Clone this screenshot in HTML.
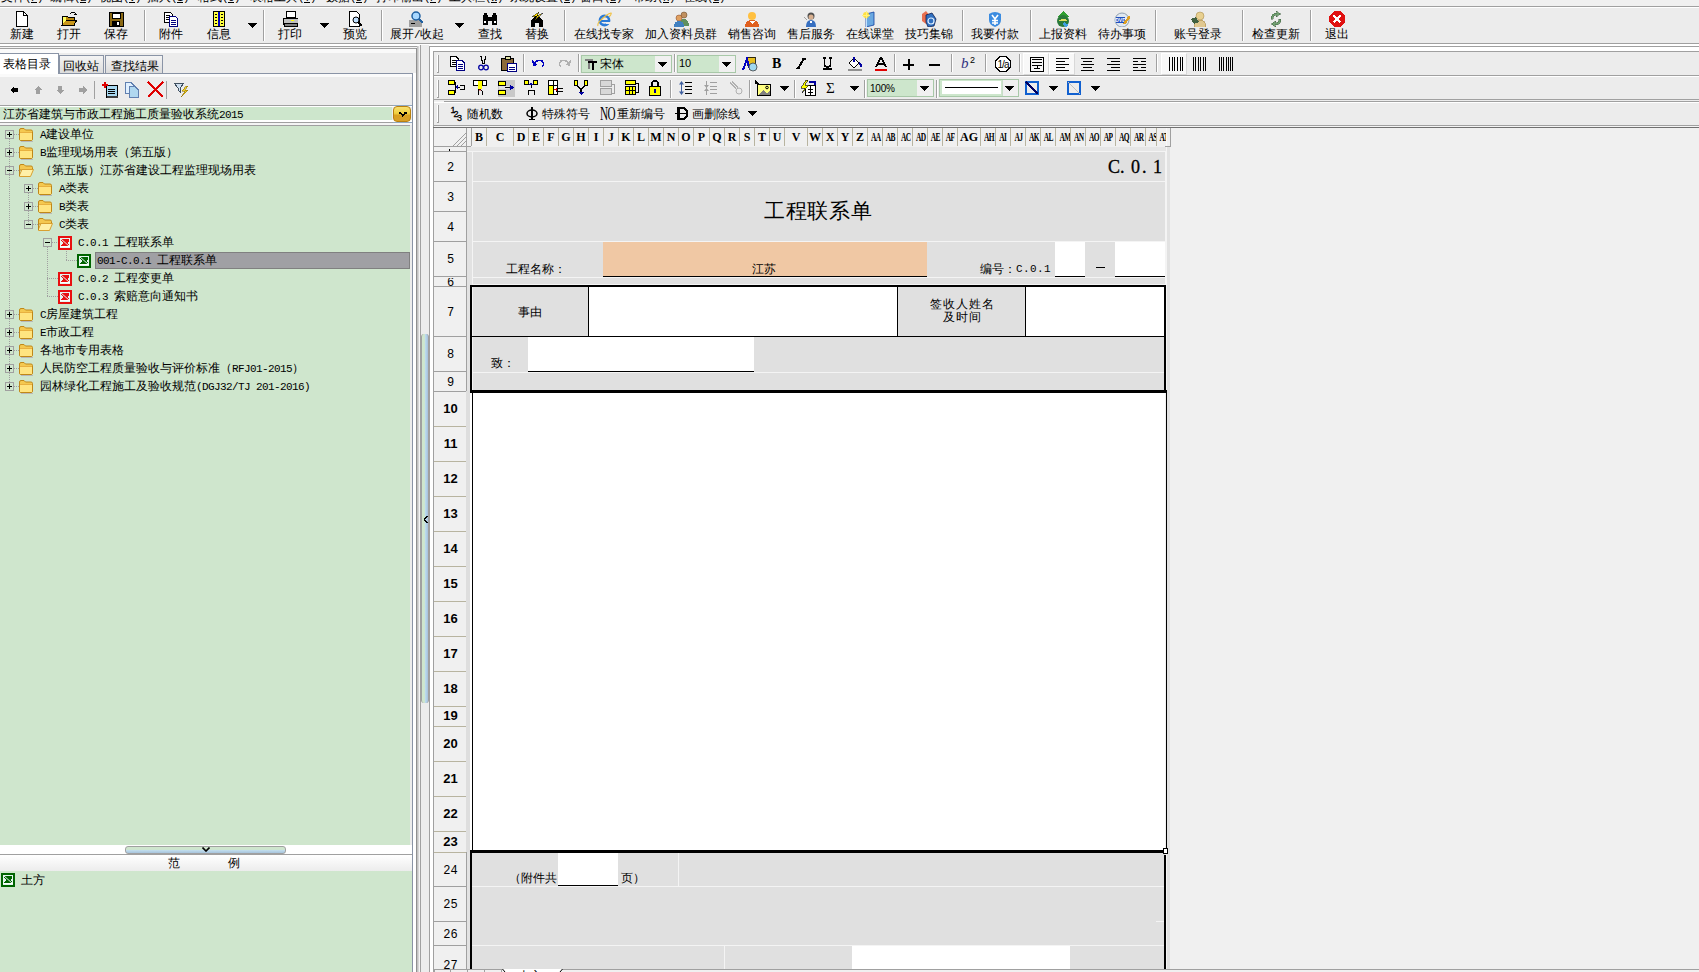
<!DOCTYPE html>
<html><head><meta charset="utf-8"><style>
*{box-sizing:border-box;margin:0;padding:0}
html,body{width:1699px;height:972px;overflow:hidden;background:#f0f0f0;font-family:"Liberation Sans",sans-serif;font-size:12px;color:#000}
body{position:relative}
.a{position:absolute;display:block}
.t{position:absolute;white-space:nowrap;line-height:12px;height:12px;font-size:12px}
.t i{display:inline-block;width:12px;height:12px;font-style:normal;text-align:center;vertical-align:top;overflow:visible}
.t u{display:inline-block;width:6px;height:12px;text-decoration:none;font-family:"Liberation Mono",monospace;font-size:11px;text-align:center;vertical-align:top;line-height:13px;position:relative;top:1px;overflow:visible}
.t b.sp{display:inline-block;width:6px;height:12px;font-weight:normal;vertical-align:top}
.hd{position:absolute;font-family:"Liberation Serif",serif;font-weight:bold;font-size:12px;line-height:18px;text-align:center;white-space:nowrap;overflow:hidden}
svg.a rect,svg.a path{shape-rendering:crispEdges}
.rn{position:absolute;left:0;width:33px;text-align:center;font-family:"Liberation Mono",monospace;font-size:12px;white-space:nowrap}
</style></head><body>
<div class="a" style="left:0px;top:0px;width:1699px;height:6px;background:#f0f0f0;overflow:hidden"></div>
<div class="a" style="left:0;top:0;width:1699px;height:6px;overflow:hidden">
<div class="t" style="left:1px;top:-9px;"><i>文</i><i>件</i><u>(</u><u>F</u><u>)</u></div>
<div class="a" style="left:31px;top:2px;width:6px;height:1px;background:#000"></div>
<div class="t" style="left:50px;top:-9px;"><i>编</i><i>辑</i><u>(</u><u>E</u><u>)</u></div>
<div class="a" style="left:80px;top:2px;width:6px;height:1px;background:#000"></div>
<div class="t" style="left:99px;top:-9px;"><i>视</i><i>图</i><u>(</u><u>V</u><u>)</u></div>
<div class="a" style="left:129px;top:2px;width:6px;height:1px;background:#000"></div>
<div class="t" style="left:147px;top:-9px;"><i>插</i><i>入</i><u>(</u><u>I</u><u>)</u></div>
<div class="a" style="left:177px;top:2px;width:6px;height:1px;background:#000"></div>
<div class="t" style="left:198px;top:-9px;"><i>格</i><i>式</i><u>(</u><u>O</u><u>)</u></div>
<div class="a" style="left:228px;top:2px;width:6px;height:1px;background:#000"></div>
<div class="t" style="left:250px;top:-9px;"><i>表</i><i>格</i><i>工</i><i>具</i><u>(</u><u>T</u><u>)</u></div>
<div class="a" style="left:304px;top:2px;width:6px;height:1px;background:#000"></div>
<div class="t" style="left:326px;top:-9px;"><i>数</i><i>据</i><u>(</u><u>D</u><u>)</u></div>
<div class="a" style="left:356px;top:2px;width:6px;height:1px;background:#000"></div>
<div class="t" style="left:376px;top:-9px;"><i>打</i><i>印</i><i>输</i><i>出</i><u>(</u><u>P</u><u>)</u></div>
<div class="a" style="left:430px;top:2px;width:6px;height:1px;background:#000"></div>
<div class="t" style="left:449px;top:-9px;"><i>工</i><i>具</i><i>栏</i><u>(</u><u>W</u><u>)</u></div>
<div class="a" style="left:491px;top:2px;width:6px;height:1px;background:#000"></div>
<div class="t" style="left:510px;top:-9px;"><i>系</i><i>统</i><i>设</i><i>置</i><u>(</u><u>S</u><u>)</u></div>
<div class="a" style="left:564px;top:2px;width:6px;height:1px;background:#000"></div>
<div class="t" style="left:580px;top:-9px;"><i>窗</i><i>口</i><u>(</u><u>B</u><u>)</u></div>
<div class="a" style="left:610px;top:2px;width:6px;height:1px;background:#000"></div>
<div class="t" style="left:633px;top:-9px;"><i>帮</i><i>助</i><u>(</u><u>H</u><u>)</u></div>
<div class="a" style="left:663px;top:2px;width:6px;height:1px;background:#000"></div>
<div class="t" style="left:683px;top:-9px;"><i>在</i><i>线</i><u>(</u><u>L</u><u>)</u></div>
<div class="a" style="left:713px;top:2px;width:6px;height:1px;background:#000"></div>
</div>
<div class="a" style="left:0px;top:6px;width:1699px;height:1px;background:#a0a0a0"></div>
<div class="a" style="left:0px;top:7px;width:1699px;height:36px;background:#ececec"></div>
<div class="a" style="left:0px;top:7px;width:1699px;height:1px;background:#ffffff"></div>
<div class="a" style="left:0px;top:43px;width:1699px;height:1px;background:#a0a0a0"></div>
<div class="a" style="left:0px;top:44px;width:1699px;height:928px;background:#f0f0f0"></div>
<div class="a" style="left:0px;top:44px;width:1699px;height:2px;background:#ffffff"></div>
<div class="t" style="left:10px;top:28px;"><i>新</i><i>建</i></div>
<div class="t" style="left:57px;top:28px;"><i>打</i><i>开</i></div>
<div class="t" style="left:104px;top:28px;"><i>保</i><i>存</i></div>
<div class="t" style="left:159px;top:28px;"><i>附</i><i>件</i></div>
<div class="t" style="left:207px;top:28px;"><i>信</i><i>息</i></div>
<div class="t" style="left:278px;top:28px;"><i>打</i><i>印</i></div>
<div class="t" style="left:343px;top:28px;"><i>预</i><i>览</i></div>
<div class="t" style="left:390px;top:28px;"><i>展</i><i>开</i><u>/</u><i>收</i><i>起</i></div>
<div class="t" style="left:478px;top:28px;"><i>查</i><i>找</i></div>
<div class="t" style="left:525px;top:28px;"><i>替</i><i>换</i></div>
<div class="t" style="left:574px;top:28px;"><i>在</i><i>线</i><i>找</i><i>专</i><i>家</i></div>
<div class="t" style="left:645px;top:28px;"><i>加</i><i>入</i><i>资</i><i>料</i><i>员</i><i>群</i></div>
<div class="t" style="left:728px;top:28px;"><i>销</i><i>售</i><i>咨</i><i>询</i></div>
<div class="t" style="left:787px;top:28px;"><i>售</i><i>后</i><i>服</i><i>务</i></div>
<div class="t" style="left:846px;top:28px;"><i>在</i><i>线</i><i>课</i><i>堂</i></div>
<div class="t" style="left:905px;top:28px;"><i>技</i><i>巧</i><i>集</i><i>锦</i></div>
<div class="t" style="left:971px;top:28px;"><i>我</i><i>要</i><i>付</i><i>款</i></div>
<div class="t" style="left:1039px;top:28px;"><i>上</i><i>报</i><i>资</i><i>料</i></div>
<div class="t" style="left:1098px;top:28px;"><i>待</i><i>办</i><i>事</i><i>项</i></div>
<div class="t" style="left:1174px;top:28px;"><i>账</i><i>号</i><i>登</i><i>录</i></div>
<div class="t" style="left:1252px;top:28px;"><i>检</i><i>查</i><i>更</i><i>新</i></div>
<div class="t" style="left:1325px;top:28px;"><i>退</i><i>出</i></div>
<div class="a" style="left:144px;top:10px;width:1px;height:31px;background:#a0a0a0"></div>
<div class="a" style="left:145px;top:10px;width:1px;height:31px;background:#ffffff"></div>
<div class="a" style="left:263px;top:10px;width:1px;height:31px;background:#a0a0a0"></div>
<div class="a" style="left:264px;top:10px;width:1px;height:31px;background:#ffffff"></div>
<div class="a" style="left:381px;top:10px;width:1px;height:31px;background:#a0a0a0"></div>
<div class="a" style="left:382px;top:10px;width:1px;height:31px;background:#ffffff"></div>
<div class="a" style="left:564px;top:10px;width:1px;height:31px;background:#a0a0a0"></div>
<div class="a" style="left:565px;top:10px;width:1px;height:31px;background:#ffffff"></div>
<div class="a" style="left:962px;top:10px;width:1px;height:31px;background:#a0a0a0"></div>
<div class="a" style="left:963px;top:10px;width:1px;height:31px;background:#ffffff"></div>
<div class="a" style="left:1030px;top:10px;width:1px;height:31px;background:#a0a0a0"></div>
<div class="a" style="left:1031px;top:10px;width:1px;height:31px;background:#ffffff"></div>
<div class="a" style="left:1155px;top:10px;width:1px;height:31px;background:#a0a0a0"></div>
<div class="a" style="left:1156px;top:10px;width:1px;height:31px;background:#ffffff"></div>
<div class="a" style="left:1242px;top:10px;width:1px;height:31px;background:#a0a0a0"></div>
<div class="a" style="left:1243px;top:10px;width:1px;height:31px;background:#ffffff"></div>
<div class="a" style="left:1310px;top:10px;width:1px;height:31px;background:#a0a0a0"></div>
<div class="a" style="left:1311px;top:10px;width:1px;height:31px;background:#ffffff"></div>
<svg class="a" style="left:247px;top:23px;" width="10" height="5" viewBox="0 0 10 5"><path d="M0 0H10L5 5Z" fill="#000"/></svg>
<svg class="a" style="left:319px;top:23px;" width="10" height="5" viewBox="0 0 10 5"><path d="M0 0H10L5 5Z" fill="#000"/></svg>
<svg class="a" style="left:454px;top:23px;" width="10" height="5" viewBox="0 0 10 5"><path d="M0 0H10L5 5Z" fill="#000"/></svg>
<svg class="a" style="left:14px;top:11px;" width="16" height="16" viewBox="0 0 16 16"><path d="M2.5 0.5H9.5L13.5 4.5V15.5H2.5Z" fill="#fff" stroke="#000"/><path d="M9.5 0.5V4.5H13.5" fill="none" stroke="#000"/></svg>
<svg class="a" style="left:61px;top:11px;" width="16" height="16" viewBox="0 0 16 16"><path d="M1 5H6L7 6H13V14H1Z" fill="#b8860b" stroke="#000" stroke-width="1"/><path d="M3 9H16L13 14H1Z" fill="#c8961b" stroke="#000"/><path d="M2 6L5 6L5 10L2 12Z" fill="#ffff60"/><path d="M9 3Q12 0 15 3" fill="none" stroke="#000"/><path d="M13 3H16V1" fill="none" stroke="#000"/></svg>
<svg class="a" style="left:108px;top:11px;" width="16" height="16" viewBox="0 0 16 16"><rect x="1" y="1" width="14" height="14" fill="#8b6914" stroke="#000"/><rect x="4" y="2" width="8" height="5" fill="#fff" stroke="#000"/><rect x="4" y="10" width="8" height="5" fill="#000"/><rect x="9" y="11" width="2" height="3" fill="#fff"/></svg>
<svg class="a" style="left:163px;top:11px;" width="16" height="16" viewBox="0 0 16 16"><path d="M1.5 1.5H7.5L9.5 3.5V11.5H1.5Z" fill="#fff" stroke="#000"/><path d="M3 4H7M3 6H7M3 8H7" stroke="#000"/><path d="M6.5 5.5H12.5L14.5 7.5V15.5H6.5Z" fill="#fff" stroke="#000080"/><path d="M8 9H13M8 11H13M8 13H13" stroke="#000080"/></svg>
<svg class="a" style="left:211px;top:11px;" width="16" height="16" viewBox="0 0 16 16"><rect x="2.5" y="0.5" width="11" height="15" fill="#ffff40" stroke="#000"/><rect x="7" y="1" width="2" height="14" fill="#0000c0"/><path d="M4 3H6M4 6H6M4 9H6M4 12H6M10 3H12M10 6H12M10 9H12M10 12H12" stroke="#000"/></svg>
<svg class="a" style="left:282px;top:11px;" width="16" height="16" viewBox="0 0 16 16"><rect x="4" y="0.5" width="9" height="6" fill="#fff" stroke="#000"/><path d="M1 7H16V13H1Z" fill="#c0c0c0" stroke="#000"/><rect x="2" y="12" width="13" height="3" fill="#808080" stroke="#000"/><rect x="9" y="9" width="3" height="1" fill="#ff0"/></svg>
<svg class="a" style="left:347px;top:11px;" width="16" height="16" viewBox="0 0 16 16"><path d="M2.5 0.5H9.5L12.5 3.5V15.5H2.5Z" fill="#fff" stroke="#000"/><circle cx="9" cy="9" r="3" fill="#c0e0ff" stroke="#000"/><path d="M11 11L15 15" stroke="#000" stroke-width="2"/></svg>
<svg class="a" style="left:408px;top:11px;" width="16" height="16" viewBox="0 0 16 16"><rect x="1" y="9" width="13" height="7" fill="#a0a0a0" rx="1"/><path d="M3 12H7" stroke="#000"/><circle cx="8" cy="5" r="4" fill="#a8d8ff" stroke="#2060a0" stroke-width="1.5"/><path d="M11 8L15 12" stroke="#2060a0" stroke-width="2.5"/></svg>
<svg class="a" style="left:482px;top:11px;" width="16" height="16" viewBox="0 0 16 16"><rect x="1" y="4" width="5" height="10" fill="#000"/><rect x="10" y="4" width="5" height="10" fill="#000"/><rect x="5" y="6" width="6" height="4" fill="#000"/><rect x="2" y="2" width="3" height="3" fill="#000"/><rect x="11" y="2" width="3" height="3" fill="#000"/><rect x="2" y="10" width="2" height="2" fill="#fff"/><rect x="12" y="10" width="2" height="2" fill="#fff"/></svg>
<svg class="a" style="left:529px;top:11px;" width="16" height="16" viewBox="0 0 16 16"><path d="M2 16V9L8 4L14 9V16H10V12H6V16Z" fill="#000"/><path d="M3 6L10 1L8 5L14 2L6 9L8 5Z" fill="#ffe000" stroke="#000" stroke-width="0.5"/></svg>
<svg class="a" style="left:596px;top:11px;" width="16" height="16" viewBox="0 0 16 16"><circle cx="8.5" cy="9.5" r="4.6" fill="none" stroke="#2a7ad8" stroke-width="2.6"/><path d="M4 9.5H13" stroke="#2a7ad8" stroke-width="2"/><rect x="10" y="10.5" width="5" height="2.5" fill="#ececec"/><path d="M2 15Q1 12 6 8Q11 3 15 2Q16 3 13 6" fill="none" stroke="#f0c040" stroke-width="1.1" style="shape-rendering:auto"/></svg>
<svg class="a" style="left:673px;top:11px;" width="16" height="16" viewBox="0 0 16 16"><circle cx="11" cy="4" r="3" fill="#c09060" stroke="#604020" stroke-width="0.5"/><path d="M6 15Q6 8 11 8Q16 8 16 15Z" fill="#609060"/><circle cx="6" cy="7" r="3" fill="#e0a060" stroke="#804020" stroke-width="0.5"/><path d="M1 16Q1 10 6 10Q11 10 11 16Z" fill="#4080c0"/></svg>
<svg class="a" style="left:744px;top:11px;" width="16" height="16" viewBox="0 0 16 16"><circle cx="8" cy="5" r="4" fill="#ffc040"/><path d="M1 16Q1 9 8 9Q15 9 15 16Z" fill="#e06020"/><path d="M5 10L8 13L11 10" fill="#fff"/></svg>
<svg class="a" style="left:803px;top:11px;" width="16" height="16" viewBox="0 0 16 16"><circle cx="8" cy="5" r="3.5" fill="#505050"/><circle cx="8" cy="6" r="2.5" fill="#d8b090"/><path d="M3 16Q3 9 8 9Q13 9 13 16Z" fill="#3870c0" style="shape-rendering:auto"/><path d="M7 10L8 14L9 10Z" fill="#fff"/><path d="M1 6L4 9" stroke="#a0a0a0" fill="none"/></svg>
<svg class="a" style="left:862px;top:11px;" width="16" height="16" viewBox="0 0 16 16"><path d="M4 3L12 1V14L4 16Z" fill="#6aa8e0" stroke="#1040a0" stroke-width="0.8" style="shape-rendering:auto"/><path d="M4.5 3V16" stroke="#c0e0ff"/><circle cx="4" cy="4" r="3" fill="#ffe040"/><path d="M0 4H8M4 0V8" stroke="#fff080"/></svg>
<svg class="a" style="left:921px;top:11px;" width="16" height="16" viewBox="0 0 16 16"><path d="M1 3L5 0L9 5L5 13L1 10Z" fill="#e87050" style="shape-rendering:auto"/><path d="M5 4L11 2L15 8L13 15L7 16L5 11Z" fill="#3070c0" stroke="#102050" stroke-width="0.8" style="shape-rendering:auto"/><circle cx="10" cy="10" r="3" fill="none" stroke="#e0f0ff" stroke-width="1.2"/></svg>
<svg class="a" style="left:987px;top:11px;" width="16" height="16" viewBox="0 0 16 16"><path d="M2 3Q8 -1 14 3V9Q14 14 8 16Q2 14 2 9Z" fill="#3c8ce0" style="shape-rendering:auto"/><path d="M5 4L8 8L11 4M8 8V14M5 9.5H11M5 12H11" stroke="#fff" stroke-width="1.6" fill="none" style="shape-rendering:auto"/></svg>
<svg class="a" style="left:1055px;top:11px;" width="16" height="16" viewBox="0 0 16 16"><path d="M8 0L14 6H2Z" fill="#30a030"/><circle cx="8" cy="10" r="6" fill="#2a7a3a"/><path d="M3 10Q8 6 13 10" fill="#e0e060"/><path d="M9 11L14 14L11 16L7 13Z" fill="#40a0e0"/></svg>
<svg class="a" style="left:1114px;top:11px;" width="16" height="16" viewBox="0 0 16 16"><circle cx="8" cy="9" r="7" fill="#e0e8f0" stroke="#90a0b0"/><rect x="2" y="6" width="9" height="6" fill="#2050c0"/><text x="6.5" y="11" font-size="5" font-family="Liberation Sans" font-weight="bold" fill="#fff" text-anchor="middle">DVD</text><path d="M10 13L16 5" stroke="#e0a020" stroke-width="2.5"/></svg>
<svg class="a" style="left:1190px;top:11px;" width="16" height="16" viewBox="0 0 16 16"><circle cx="10" cy="5" r="4" fill="#e8d090" stroke="#a08040" stroke-width="0.5"/><path d="M4 16Q4 9 10 9Q16 9 16 16Z" fill="#e0c890" stroke="#a08040" stroke-width="0.5"/><path d="M1 8L6 6L9 11L4 13Z" fill="#406040"/></svg>
<svg class="a" style="left:1268px;top:11px;" width="16" height="16" viewBox="0 0 16 16"><path d="M3 8Q3 2 9 2L8 0L13 3L8 6L9 4Q5 4 5 8Z" fill="#70a070" stroke="#406040" stroke-width="0.5"/><path d="M13 8Q13 14 7 14L8 16L3 13L8 10L7 12Q11 12 11 8Z" fill="#70a070" stroke="#406040" stroke-width="0.5"/></svg>
<svg class="a" style="left:1329px;top:11px;" width="16" height="16" viewBox="0 0 16 16"><path d="M5 0H11L16 5V11L11 16H5L0 11V5Z" fill="#e01010"/><path d="M4.5 4.5L11.5 11.5M11.5 4.5L4.5 11.5" stroke="#fff" stroke-width="2.5"/></svg>
<div class="a" style="left:0px;top:46px;width:419px;height:1px;background:#a0a0a0"></div>
<div class="a" style="left:0px;top:47px;width:417px;height:1px;background:#f4f4f4"></div>
<div class="a" style="left:0px;top:48px;width:417px;height:1px;background:#a0a0a0"></div>
<div class="a" style="left:0px;top:49px;width:416px;height:923px;background:#ececec"></div>
<div class="a" style="left:0px;top:49px;width:416px;height:4px;background:#fafafa"></div>
<div class="a" style="left:416px;top:48px;width:1px;height:924px;background:#909090"></div>
<div class="a" style="left:417px;top:46px;width:2px;height:926px;background:linear-gradient(90deg,#b8b8b8,#e0e0e0)"></div>
<div class="a" style="left:419px;top:45px;width:1px;height:927px;background:#f4f4f4"></div>
<div class="a" style="left:0px;top:73px;width:413px;height:1px;background:#8a94a6"></div>
<div class="a" style="left:0px;top:53px;width:59px;height:21px;background:#ffffff;border-top:1px solid #8a94a6;border-right:1px solid #8a94a6"></div>
<div class="a" style="left:59px;top:55px;width:45px;height:19px;background:linear-gradient(#f4f4f4,#dcdcdc);border:1px solid #8a94a6"></div>
<div class="a" style="left:105px;top:55px;width:58px;height:19px;background:linear-gradient(#f4f4f4,#dcdcdc);border:1px solid #8a94a6"></div>
<div class="t" style="left:3px;top:58px;"><i>表</i><i>格</i><i>目</i><i>录</i></div>
<div class="t" style="left:63px;top:60px;"><i>回</i><i>收</i><i>站</i></div>
<div class="t" style="left:111px;top:60px;"><i>查</i><i>找</i><i>结</i><i>果</i></div>
<div class="a" style="left:0px;top:74px;width:412px;height:3px;background:#fafafa"></div>
<div class="a" style="left:412px;top:73px;width:1px;height:899px;background:#8a94a6"></div>
<div class="a" style="left:413px;top:73px;width:3px;height:899px;background:#ffffff"></div>
<div class="a" style="left:0px;top:105px;width:393px;height:1px;background:#a0a0a0"></div>
<div class="a" style="left:393px;top:105px;width:19px;height:1px;background:#90a8c0"></div>
<svg class="a" style="left:10px;top:86px;" width="8" height="8" viewBox="0 0 8 8"><path d="M0 4L4 0V2H8V6H4V8Z" fill="#000"/></svg>
<svg class="a" style="left:34px;top:86px;" width="8" height="8" viewBox="0 0 8 8"><path d="M4 0L8 4H6V8H2V4H0Z" fill="#a0a0a0"/></svg>
<svg class="a" style="left:56px;top:86px;" width="8" height="8" viewBox="0 0 8 8"><path d="M4 8L8 4H6V0H2V4H0Z" fill="#a0a0a0"/></svg>
<svg class="a" style="left:79px;top:86px;" width="8" height="8" viewBox="0 0 8 8"><path d="M8 4L4 0V2H0V6H4V8Z" fill="#a0a0a0"/></svg>
<div class="a" style="left:94px;top:81px;width:1px;height:18px;background:#a0a0a0"></div>
<div class="a" style="left:166px;top:81px;width:1px;height:18px;background:#a0a0a0"></div>
<svg class="a" style="left:101px;top:81px;" width="17" height="17" viewBox="0 0 17 17"><rect x="5" y="4" width="11" height="12" fill="#a8d8f0" stroke="#000"/><path d="M7 8H14M7 10H14M7 12H14" stroke="#000"/><path d="M1 4H7M4 1V7" stroke="#e00000" stroke-width="2.5"/><rect x="6" y="15" width="11" height="2" fill="#404040"/></svg>
<svg class="a" style="left:124px;top:81px;" width="16" height="17" viewBox="0 0 16 17"><path d="M1.5 1.5H7L10 4.5V12.5H1.5Z" fill="#e0f0ff" stroke="#6080b0"/><path d="M5.5 5.5H11L14.5 9V16.5H5.5Z" fill="#b0d8f0" stroke="#6080b0"/></svg>
<svg class="a" style="left:147px;top:81px;" width="17" height="17" viewBox="0 0 17 17"><path d="M1 1L16 16M16 1L1 16" stroke="#e00000" stroke-width="2"/></svg>
<svg class="a" style="left:173px;top:81px;" width="18" height="17" viewBox="0 0 18 17"><path d="M1 2H11L7 7V11L5 9V7Z" fill="#d0e0f0" stroke="#405060"/><path d="M13 5L9 10H12L8 16L15 9H12L15 5Z" fill="#f0d020" stroke="#806000" stroke-width="0.5"/></svg>
<div class="a" style="left:0px;top:106px;width:412px;height:1px;background:#ffffff"></div>
<div class="a" style="left:0px;top:107px;width:392px;height:13px;background:#cde6cc"></div>
<div class="a" style="left:0px;top:120px;width:412px;height:2px;background:#ffffff"></div>
<div class="t" style="left:3px;top:108px;"><i>江</i><i>苏</i><i>省</i><i>建</i><i>筑</i><i>与</i><i>市</i><i>政</i><i>工</i><i>程</i><i>施</i><i>工</i><i>质</i><i>量</i><i>验</i><i>收</i><i>系</i><i>统</i><u>2</u><u>0</u><u>1</u><u>5</u></div>
<div class="a" style="left:0px;top:122px;width:393px;height:1px;background:#a0a0a0"></div>
<div class="a" style="left:393px;top:122px;width:19px;height:1px;background:#90a8c0"></div>
<div class="a" style="left:0px;top:123px;width:412px;height:2px;background:#f4f4f4"></div>
<div class="a" style="left:393px;top:106px;width:18px;height:16px;background:linear-gradient(#f8e070 0%,#f0d040 45%,#d8a020 60%,#d8a028 100%);border:1px solid #b88010;border-radius:4px"></div>
<svg class="a" style="left:399px;top:112px;" width="8" height="5" viewBox="0 0 8 5"><path d="M0 1H2L4 4L6 1H8" stroke="#000" fill="none" stroke-width="1.4"/></svg>
<div class="a" style="left:0px;top:125px;width:410px;height:1px;background:#a0a0a0"></div>
<div class="a" style="left:0px;top:126px;width:410px;height:719px;background:#cfe6cd"></div>
<div class="a" style="left:0;top:125px;width:412px;height:720px;overflow:hidden">
</div>
<div class="a" style="left:9px;top:139px;width:1px;height:247px;background:repeating-linear-gradient(#a0a0a0 0 1px,transparent 1px 2px)"></div>
<div class="a" style="left:28px;top:229px;width:1px;height:-5px;background:repeating-linear-gradient(#a0a0a0 0 1px,transparent 1px 2px)"></div>
<div class="a" style="left:28px;top:193px;width:1px;height:31px;background:repeating-linear-gradient(#a0a0a0 0 1px,transparent 1px 2px)"></div>
<div class="a" style="left:47px;top:247px;width:1px;height:49px;background:repeating-linear-gradient(#a0a0a0 0 1px,transparent 1px 2px)"></div>
<div class="a" style="left:66px;top:251px;width:1px;height:9px;background:repeating-linear-gradient(#a0a0a0 0 1px,transparent 1px 2px)"></div>
<div class="a" style="left:14px;top:134px;width:5px;height:1px;background:repeating-linear-gradient(90deg,#a0a0a0 0 1px,transparent 1px 2px)"></div>
<div class="a" style="left:14px;top:152px;width:5px;height:1px;background:repeating-linear-gradient(90deg,#a0a0a0 0 1px,transparent 1px 2px)"></div>
<div class="a" style="left:14px;top:170px;width:5px;height:1px;background:repeating-linear-gradient(90deg,#a0a0a0 0 1px,transparent 1px 2px)"></div>
<div class="a" style="left:14px;top:314px;width:5px;height:1px;background:repeating-linear-gradient(90deg,#a0a0a0 0 1px,transparent 1px 2px)"></div>
<div class="a" style="left:14px;top:332px;width:5px;height:1px;background:repeating-linear-gradient(90deg,#a0a0a0 0 1px,transparent 1px 2px)"></div>
<div class="a" style="left:14px;top:350px;width:5px;height:1px;background:repeating-linear-gradient(90deg,#a0a0a0 0 1px,transparent 1px 2px)"></div>
<div class="a" style="left:14px;top:368px;width:5px;height:1px;background:repeating-linear-gradient(90deg,#a0a0a0 0 1px,transparent 1px 2px)"></div>
<div class="a" style="left:14px;top:386px;width:5px;height:1px;background:repeating-linear-gradient(90deg,#a0a0a0 0 1px,transparent 1px 2px)"></div>
<div class="a" style="left:33px;top:188px;width:5px;height:1px;background:repeating-linear-gradient(90deg,#a0a0a0 0 1px,transparent 1px 2px)"></div>
<div class="a" style="left:33px;top:206px;width:5px;height:1px;background:repeating-linear-gradient(90deg,#a0a0a0 0 1px,transparent 1px 2px)"></div>
<div class="a" style="left:33px;top:224px;width:5px;height:1px;background:repeating-linear-gradient(90deg,#a0a0a0 0 1px,transparent 1px 2px)"></div>
<div class="a" style="left:52px;top:242px;width:6px;height:1px;background:repeating-linear-gradient(90deg,#a0a0a0 0 1px,transparent 1px 2px)"></div>
<div class="a" style="left:47px;top:278px;width:11px;height:1px;background:repeating-linear-gradient(90deg,#a0a0a0 0 1px,transparent 1px 2px)"></div>
<div class="a" style="left:47px;top:296px;width:11px;height:1px;background:repeating-linear-gradient(90deg,#a0a0a0 0 1px,transparent 1px 2px)"></div>
<div class="a" style="left:66px;top:260px;width:11px;height:1px;background:repeating-linear-gradient(90deg,#a0a0a0 0 1px,transparent 1px 2px)"></div>
<svg class="a" style="left:5px;top:130px;" width="9" height="9" viewBox="0 0 9 9"><rect x="0.5" y="0.5" width="8" height="8" fill="none" stroke="#a0a0a0"/><path d="M2 4.5H7" stroke="#000"/><path d="M4.5 2V7" stroke="#000"/></svg>
<svg class="a" style="left:18px;top:127px;" width="16" height="15" viewBox="0 0 16 15"><path d="M1.5 12V3Q1.5 1.5 3 1.5H6L7.5 3H13Q14.5 3 14.5 4.5V12Q14.5 13.5 13 13.5H3Q1.5 13.5 1.5 12Z" fill="#f4c850" stroke="#c08818" style="shape-rendering:auto"/><rect x="2" y="5" width="12" height="8" fill="#ffe480"/><path d="M2 5.5H14" stroke="#e8b040"/><path d="M3 14.5H15" stroke="#b8b8b8"/></svg>
<div class="t" style="left:40px;top:128px;"><u>A</u><i>建</i><i>设</i><i>单</i><i>位</i></div>
<svg class="a" style="left:5px;top:148px;" width="9" height="9" viewBox="0 0 9 9"><rect x="0.5" y="0.5" width="8" height="8" fill="none" stroke="#a0a0a0"/><path d="M2 4.5H7" stroke="#000"/><path d="M4.5 2V7" stroke="#000"/></svg>
<svg class="a" style="left:18px;top:145px;" width="16" height="15" viewBox="0 0 16 15"><path d="M1.5 12V3Q1.5 1.5 3 1.5H6L7.5 3H13Q14.5 3 14.5 4.5V12Q14.5 13.5 13 13.5H3Q1.5 13.5 1.5 12Z" fill="#f4c850" stroke="#c08818" style="shape-rendering:auto"/><rect x="2" y="5" width="12" height="8" fill="#ffe480"/><path d="M2 5.5H14" stroke="#e8b040"/><path d="M3 14.5H15" stroke="#b8b8b8"/></svg>
<div class="t" style="left:40px;top:146px;"><u>B</u><i>监</i><i>理</i><i>现</i><i>场</i><i>用</i><i>表</i><i>（</i><i>第</i><i>五</i><i>版</i><i>）</i></div>
<svg class="a" style="left:5px;top:166px;" width="9" height="9" viewBox="0 0 9 9"><rect x="0.5" y="0.5" width="8" height="8" fill="none" stroke="#a0a0a0"/><path d="M2 4.5H7" stroke="#000"/></svg>
<svg class="a" style="left:18px;top:163px;" width="16" height="15" viewBox="0 0 16 15"><path d="M1.5 12V3Q1.5 1.5 3 1.5H6L7.5 3H13Q14.5 3 14.5 4.5V7H1.5Z" fill="#f4c850" stroke="#c08818" style="shape-rendering:auto"/><path d="M4 6.5H15.5L12.5 13.5H1.5V12Z" fill="#fff0a8" stroke="#d8a030" style="shape-rendering:auto"/><path d="M1.5 6V13" stroke="#c08818"/></svg>
<div class="t" style="left:40px;top:164px;"><i>（</i><i>第</i><i>五</i><i>版</i><i>）</i><i>江</i><i>苏</i><i>省</i><i>建</i><i>设</i><i>工</i><i>程</i><i>监</i><i>理</i><i>现</i><i>场</i><i>用</i><i>表</i></div>
<svg class="a" style="left:24px;top:184px;" width="9" height="9" viewBox="0 0 9 9"><rect x="0.5" y="0.5" width="8" height="8" fill="none" stroke="#a0a0a0"/><path d="M2 4.5H7" stroke="#000"/><path d="M4.5 2V7" stroke="#000"/></svg>
<svg class="a" style="left:37px;top:181px;" width="16" height="15" viewBox="0 0 16 15"><path d="M1.5 12V3Q1.5 1.5 3 1.5H6L7.5 3H13Q14.5 3 14.5 4.5V12Q14.5 13.5 13 13.5H3Q1.5 13.5 1.5 12Z" fill="#f4c850" stroke="#c08818" style="shape-rendering:auto"/><rect x="2" y="5" width="12" height="8" fill="#ffe480"/><path d="M2 5.5H14" stroke="#e8b040"/><path d="M3 14.5H15" stroke="#b8b8b8"/></svg>
<div class="t" style="left:59px;top:182px;"><u>A</u><i>类</i><i>表</i></div>
<svg class="a" style="left:24px;top:202px;" width="9" height="9" viewBox="0 0 9 9"><rect x="0.5" y="0.5" width="8" height="8" fill="none" stroke="#a0a0a0"/><path d="M2 4.5H7" stroke="#000"/><path d="M4.5 2V7" stroke="#000"/></svg>
<svg class="a" style="left:37px;top:199px;" width="16" height="15" viewBox="0 0 16 15"><path d="M1.5 12V3Q1.5 1.5 3 1.5H6L7.5 3H13Q14.5 3 14.5 4.5V12Q14.5 13.5 13 13.5H3Q1.5 13.5 1.5 12Z" fill="#f4c850" stroke="#c08818" style="shape-rendering:auto"/><rect x="2" y="5" width="12" height="8" fill="#ffe480"/><path d="M2 5.5H14" stroke="#e8b040"/><path d="M3 14.5H15" stroke="#b8b8b8"/></svg>
<div class="t" style="left:59px;top:200px;"><u>B</u><i>类</i><i>表</i></div>
<svg class="a" style="left:24px;top:220px;" width="9" height="9" viewBox="0 0 9 9"><rect x="0.5" y="0.5" width="8" height="8" fill="none" stroke="#a0a0a0"/><path d="M2 4.5H7" stroke="#000"/></svg>
<svg class="a" style="left:37px;top:217px;" width="16" height="15" viewBox="0 0 16 15"><path d="M1.5 12V3Q1.5 1.5 3 1.5H6L7.5 3H13Q14.5 3 14.5 4.5V7H1.5Z" fill="#f4c850" stroke="#c08818" style="shape-rendering:auto"/><path d="M4 6.5H15.5L12.5 13.5H1.5V12Z" fill="#fff0a8" stroke="#d8a030" style="shape-rendering:auto"/><path d="M1.5 6V13" stroke="#c08818"/></svg>
<div class="t" style="left:59px;top:218px;"><u>C</u><i>类</i><i>表</i></div>
<svg class="a" style="left:43px;top:238px;" width="9" height="9" viewBox="0 0 9 9"><rect x="0.5" y="0.5" width="8" height="8" fill="none" stroke="#a0a0a0"/><path d="M2 4.5H7" stroke="#000"/></svg>
<svg class="a" style="left:58px;top:236px;" width="14" height="14" viewBox="0 0 14 14"><rect x="0" y="0" width="14" height="14" fill="#e81010"/><rect x="2" y="2" width="10" height="10" fill="#e4f6f0"/><path d="M3 3H11V5L9 7L11 9V10H3V9L5 7L3 5Z" fill="#e81010"/><path d="M3 3L11 10" stroke="#e4f6f0" stroke-width="1" style="shape-rendering:auto"/><rect x="2" y="10" width="10" height="1" fill="#ffffff"/><rect x="2" y="3" width="1" height="2" fill="#e4f6f0"/></svg>
<div class="t" style="left:78px;top:236px;"><u>C</u><u>.</u><u>0</u><u>.</u><u>1</u><b class="sp"> </b><i>工</i><i>程</i><i>联</i><i>系</i><i>单</i></div>
<div class="a" style="left:95px;top:252px;width:315px;height:17px;background:#a0a0a4;border:1px solid #808080"></div>
<svg class="a" style="left:77px;top:254px;" width="14" height="14" viewBox="0 0 14 14"><rect x="0" y="0" width="14" height="14" fill="#006400"/><rect x="2" y="2" width="10" height="10" fill="#e4f6f0"/><path d="M3 3H11V5L9 7L11 9V10H3V9L5 7L3 5Z" fill="#006400"/><path d="M3 3L11 10" stroke="#e4f6f0" stroke-width="1" style="shape-rendering:auto"/><rect x="2" y="10" width="10" height="1" fill="#ffffff"/><rect x="2" y="3" width="1" height="2" fill="#e4f6f0"/></svg>
<div class="t" style="left:97px;top:254px;"><u>0</u><u>0</u><u>1</u><u>-</u><u>C</u><u>.</u><u>0</u><u>.</u><u>1</u><b class="sp"> </b><i>工</i><i>程</i><i>联</i><i>系</i><i>单</i></div>
<svg class="a" style="left:58px;top:272px;" width="14" height="14" viewBox="0 0 14 14"><rect x="0" y="0" width="14" height="14" fill="#e81010"/><rect x="2" y="2" width="10" height="10" fill="#e4f6f0"/><path d="M3 3H11V5L9 7L11 9V10H3V9L5 7L3 5Z" fill="#e81010"/><path d="M3 3L11 10" stroke="#e4f6f0" stroke-width="1" style="shape-rendering:auto"/><rect x="2" y="10" width="10" height="1" fill="#ffffff"/><rect x="2" y="3" width="1" height="2" fill="#e4f6f0"/></svg>
<div class="t" style="left:78px;top:272px;"><u>C</u><u>.</u><u>0</u><u>.</u><u>2</u><b class="sp"> </b><i>工</i><i>程</i><i>变</i><i>更</i><i>单</i></div>
<svg class="a" style="left:58px;top:290px;" width="14" height="14" viewBox="0 0 14 14"><rect x="0" y="0" width="14" height="14" fill="#e81010"/><rect x="2" y="2" width="10" height="10" fill="#e4f6f0"/><path d="M3 3H11V5L9 7L11 9V10H3V9L5 7L3 5Z" fill="#e81010"/><path d="M3 3L11 10" stroke="#e4f6f0" stroke-width="1" style="shape-rendering:auto"/><rect x="2" y="10" width="10" height="1" fill="#ffffff"/><rect x="2" y="3" width="1" height="2" fill="#e4f6f0"/></svg>
<div class="t" style="left:78px;top:290px;"><u>C</u><u>.</u><u>0</u><u>.</u><u>3</u><b class="sp"> </b><i>索</i><i>赔</i><i>意</i><i>向</i><i>通</i><i>知</i><i>书</i></div>
<svg class="a" style="left:5px;top:310px;" width="9" height="9" viewBox="0 0 9 9"><rect x="0.5" y="0.5" width="8" height="8" fill="none" stroke="#a0a0a0"/><path d="M2 4.5H7" stroke="#000"/><path d="M4.5 2V7" stroke="#000"/></svg>
<svg class="a" style="left:18px;top:307px;" width="16" height="15" viewBox="0 0 16 15"><path d="M1.5 12V3Q1.5 1.5 3 1.5H6L7.5 3H13Q14.5 3 14.5 4.5V12Q14.5 13.5 13 13.5H3Q1.5 13.5 1.5 12Z" fill="#f4c850" stroke="#c08818" style="shape-rendering:auto"/><rect x="2" y="5" width="12" height="8" fill="#ffe480"/><path d="M2 5.5H14" stroke="#e8b040"/><path d="M3 14.5H15" stroke="#b8b8b8"/></svg>
<div class="t" style="left:40px;top:308px;"><u>C</u><i>房</i><i>屋</i><i>建</i><i>筑</i><i>工</i><i>程</i></div>
<svg class="a" style="left:5px;top:328px;" width="9" height="9" viewBox="0 0 9 9"><rect x="0.5" y="0.5" width="8" height="8" fill="none" stroke="#a0a0a0"/><path d="M2 4.5H7" stroke="#000"/><path d="M4.5 2V7" stroke="#000"/></svg>
<svg class="a" style="left:18px;top:325px;" width="16" height="15" viewBox="0 0 16 15"><path d="M1.5 12V3Q1.5 1.5 3 1.5H6L7.5 3H13Q14.5 3 14.5 4.5V12Q14.5 13.5 13 13.5H3Q1.5 13.5 1.5 12Z" fill="#f4c850" stroke="#c08818" style="shape-rendering:auto"/><rect x="2" y="5" width="12" height="8" fill="#ffe480"/><path d="M2 5.5H14" stroke="#e8b040"/><path d="M3 14.5H15" stroke="#b8b8b8"/></svg>
<div class="t" style="left:40px;top:326px;"><u>E</u><i>市</i><i>政</i><i>工</i><i>程</i></div>
<svg class="a" style="left:5px;top:346px;" width="9" height="9" viewBox="0 0 9 9"><rect x="0.5" y="0.5" width="8" height="8" fill="none" stroke="#a0a0a0"/><path d="M2 4.5H7" stroke="#000"/><path d="M4.5 2V7" stroke="#000"/></svg>
<svg class="a" style="left:18px;top:343px;" width="16" height="15" viewBox="0 0 16 15"><path d="M1.5 12V3Q1.5 1.5 3 1.5H6L7.5 3H13Q14.5 3 14.5 4.5V12Q14.5 13.5 13 13.5H3Q1.5 13.5 1.5 12Z" fill="#f4c850" stroke="#c08818" style="shape-rendering:auto"/><rect x="2" y="5" width="12" height="8" fill="#ffe480"/><path d="M2 5.5H14" stroke="#e8b040"/><path d="M3 14.5H15" stroke="#b8b8b8"/></svg>
<div class="t" style="left:40px;top:344px;"><i>各</i><i>地</i><i>市</i><i>专</i><i>用</i><i>表</i><i>格</i></div>
<svg class="a" style="left:5px;top:364px;" width="9" height="9" viewBox="0 0 9 9"><rect x="0.5" y="0.5" width="8" height="8" fill="none" stroke="#a0a0a0"/><path d="M2 4.5H7" stroke="#000"/><path d="M4.5 2V7" stroke="#000"/></svg>
<svg class="a" style="left:18px;top:361px;" width="16" height="15" viewBox="0 0 16 15"><path d="M1.5 12V3Q1.5 1.5 3 1.5H6L7.5 3H13Q14.5 3 14.5 4.5V12Q14.5 13.5 13 13.5H3Q1.5 13.5 1.5 12Z" fill="#f4c850" stroke="#c08818" style="shape-rendering:auto"/><rect x="2" y="5" width="12" height="8" fill="#ffe480"/><path d="M2 5.5H14" stroke="#e8b040"/><path d="M3 14.5H15" stroke="#b8b8b8"/></svg>
<div class="t" style="left:40px;top:362px;"><i>人</i><i>民</i><i>防</i><i>空</i><i>工</i><i>程</i><i>质</i><i>量</i><i>验</i><i>收</i><i>与</i><i>评</i><i>价</i><i>标</i><i>准</i><i>（</i><u>R</u><u>F</u><u>J</u><u>0</u><u>1</u><u>-</u><u>2</u><u>0</u><u>1</u><u>5</u><i>）</i></div>
<svg class="a" style="left:5px;top:382px;" width="9" height="9" viewBox="0 0 9 9"><rect x="0.5" y="0.5" width="8" height="8" fill="none" stroke="#a0a0a0"/><path d="M2 4.5H7" stroke="#000"/><path d="M4.5 2V7" stroke="#000"/></svg>
<svg class="a" style="left:18px;top:379px;" width="16" height="15" viewBox="0 0 16 15"><path d="M1.5 12V3Q1.5 1.5 3 1.5H6L7.5 3H13Q14.5 3 14.5 4.5V12Q14.5 13.5 13 13.5H3Q1.5 13.5 1.5 12Z" fill="#f4c850" stroke="#c08818" style="shape-rendering:auto"/><rect x="2" y="5" width="12" height="8" fill="#ffe480"/><path d="M2 5.5H14" stroke="#e8b040"/><path d="M3 14.5H15" stroke="#b8b8b8"/></svg>
<div class="t" style="left:40px;top:380px;"><i>园</i><i>林</i><i>绿</i><i>化</i><i>工</i><i>程</i><i>施</i><i>工</i><i>及</i><i>验</i><i>收</i><i>规</i><i>范</i><u>(</u><u>D</u><u>G</u><u>J</u><u>3</u><u>2</u><u>/</u><u>T</u><u>J</u><b class="sp"> </b><u>2</u><u>0</u><u>1</u><u>-</u><u>2</u><u>0</u><u>1</u><u>6</u><u>)</u></div>
<div class="a" style="left:0px;top:845px;width:412px;height:9px;background:#ffffff"></div>
<div class="a" style="left:125px;top:846px;width:161px;height:8px;background:linear-gradient(#cfe6cd 0%,#cfe6cd 40%,#c0dcec 55%,#a8c4dc 100%);border:1px solid #a0a0a0;border-radius:3px"></div>
<svg class="a" style="left:202px;top:847px;" width="8" height="5" viewBox="0 0 8 5"><path d="M0.5 0.5L4 4L7.5 0.5" stroke="#000" fill="none" stroke-width="1.6" style="shape-rendering:auto"/></svg>
<div class="a" style="left:0px;top:854px;width:412px;height:1px;background:#a0a0a0"></div>
<div class="a" style="left:0px;top:855px;width:412px;height:16px;background:linear-gradient(#ffffff,#ececec)"></div>
<div class="t" style="left:168px;top:857px;"><i>范</i></div>
<div class="t" style="left:228px;top:857px;"><i>例</i></div>
<div class="a" style="left:0px;top:871px;width:412px;height:101px;background:#cfe6cd"></div>
<svg class="a" style="left:1px;top:873px;" width="14" height="14" viewBox="0 0 14 14"><rect x="0" y="0" width="14" height="14" fill="#006400"/><rect x="2" y="2" width="10" height="10" fill="#e4f6f0"/><path d="M3 3H11V5L9 7L11 9V10H3V9L5 7L3 5Z" fill="#006400"/><path d="M3 3L11 10" stroke="#e4f6f0" stroke-width="1" style="shape-rendering:auto"/><rect x="2" y="10" width="10" height="1" fill="#ffffff"/><rect x="2" y="3" width="1" height="2" fill="#e4f6f0"/></svg>
<div class="t" style="left:21px;top:874px;"><i>土</i><i>方</i></div>
<div class="a" style="left:420px;top:45px;width:1px;height:927px;background:#a0a0a0"></div>
<div class="a" style="left:421px;top:45px;width:8px;height:927px;background:#ececec"></div>
<div class="a" style="left:421px;top:334px;width:8px;height:369px;background:linear-gradient(90deg,#cfe6cd 0%,#cfe6cd 40%,#b8d8f0 60%,#a8c0d8 100%);border-left:1px solid #a0a0a0;border-right:1px solid #a0a0a0;border-radius:3px 3px 3px 3px"></div>
<svg class="a" style="left:423px;top:515px;" width="6" height="9" viewBox="0 0 6 9"><path d="M4.5 1L1.5 4.5L4.5 8" stroke="#000" fill="none" stroke-width="1.4"/></svg>
<div class="a" style="left:429px;top:46px;width:1270px;height:926px;background:#f0f0f0"></div>
<div class="a" style="left:429px;top:46px;width:1px;height:926px;background:#a0a0a0"></div>
<div class="a" style="left:429px;top:46px;width:1270px;height:1px;background:#a0a0a0"></div>
<div class="a" style="left:430px;top:47px;width:3px;height:925px;background:#ffffff"></div>
<div class="a" style="left:430px;top:47px;width:1269px;height:4px;background:#ffffff"></div>
<div class="a" style="left:433px;top:51px;width:1266px;height:1px;background:#a0a0a0"></div>
<div class="a" style="left:433px;top:51px;width:1px;height:921px;background:#a0a0a0"></div>
<div class="a" style="left:434px;top:52px;width:1265px;height:23px;background:#ececec"></div>
<div class="a" style="left:434px;top:75px;width:1265px;height:1px;background:#a0a0a0"></div>
<div class="a" style="left:434px;top:76px;width:1265px;height:1px;background:#ffffff"></div>
<div class="a" style="left:434px;top:77px;width:1265px;height:22px;background:#ececec"></div>
<div class="a" style="left:434px;top:99px;width:1265px;height:1px;background:#a0a0a0"></div>
<div class="a" style="left:434px;top:100px;width:1265px;height:1px;background:#ececec"></div>
<div class="a" style="left:444px;top:101px;width:1255px;height:1px;background:#a0a0a0"></div>
<div class="a" style="left:434px;top:102px;width:1265px;height:1px;background:#ffffff"></div>
<div class="a" style="left:434px;top:103px;width:1265px;height:22px;background:#ececec"></div>
<div class="a" style="left:434px;top:125px;width:1265px;height:1px;background:#a0a0a0"></div>
<div class="a" style="left:434px;top:126px;width:1265px;height:1px;background:#f4f4f4"></div>
<div class="a" style="left:437px;top:55px;width:1px;height:17px;background:#ffffff"></div>
<div class="a" style="left:438px;top:55px;width:1px;height:17px;background:#a0a0a0"></div>
<div class="a" style="left:437px;top:72px;width:2px;height:1px;background:#a0a0a0"></div>
<div class="a" style="left:437px;top:80px;width:1px;height:17px;background:#ffffff"></div>
<div class="a" style="left:438px;top:80px;width:1px;height:17px;background:#a0a0a0"></div>
<div class="a" style="left:437px;top:97px;width:2px;height:1px;background:#a0a0a0"></div>
<div class="a" style="left:437px;top:105px;width:1px;height:17px;background:#ffffff"></div>
<div class="a" style="left:438px;top:105px;width:1px;height:17px;background:#a0a0a0"></div>
<div class="a" style="left:437px;top:122px;width:2px;height:1px;background:#a0a0a0"></div>
<svg class="a" style="left:450px;top:56px;" width="16" height="15" viewBox="0 0 16 15"><path d="M0.5 0.5H6L8.5 3V10.5H0.5Z" fill="#fff" stroke="#000"/><path d="M2 4H6M2 6H6M2 8H6" stroke="#000"/><path d="M6.5 4.5H12L14.5 7V14.5H6.5Z" fill="#fff" stroke="#000080"/><path d="M8 8H13M8 10H13M8 12H13" stroke="#000080"/></svg>
<svg class="a" style="left:478px;top:56px;" width="11" height="15" viewBox="0 0 11 15"><path d="M3 0L5 8M8 0L6 8" stroke="#000" stroke-width="1.2"/><circle cx="3" cy="11.5" r="2.3" fill="none" stroke="#0000a0" stroke-width="1.3"/><circle cx="8" cy="11.5" r="2.3" fill="none" stroke="#0000a0" stroke-width="1.3"/></svg>
<svg class="a" style="left:501px;top:56px;" width="17" height="16" viewBox="0 0 17 16"><rect x="0.5" y="2.5" width="12" height="12" fill="#8b6a3a" stroke="#000" rx="1"/><rect x="4" y="0.5" width="5" height="3" fill="#e0e0a0" stroke="#000"/><path d="M6.5 7.5H15.5V15.5H6.5Z" fill="#fff" stroke="#000080"/><path d="M8 11H14M8 13H14" stroke="#000080"/></svg>
<div class="a" style="left:523px;top:54px;width:1px;height:18px;background:#a0a0a0"></div>
<div class="a" style="left:524px;top:54px;width:1px;height:18px;background:#ffffff"></div>
<svg class="a" style="left:532px;top:59px;" width="13" height="9" viewBox="0 0 13 9"><path d="M2 4Q6 0 10 2Q13 5 10 8" fill="none" stroke="#0000c0" stroke-width="1.5"/><path d="M0 1L1 7L6 6Z" fill="#0000c0"/></svg>
<svg class="a" style="left:558px;top:59px;" width="13" height="9" viewBox="0 0 13 9"><path d="M11 4Q7 0 3 2Q0 5 3 8" fill="none" stroke="#b0b0b0" stroke-width="1.5"/><path d="M13 1L12 7L7 6Z" fill="#b0b0b0"/></svg>
<div class="a" style="left:578px;top:54px;width:1px;height:18px;background:#a0a0a0"></div>
<div class="a" style="left:579px;top:54px;width:1px;height:18px;background:#ffffff"></div>
<div class="a" style="left:581px;top:55px;width:91px;height:18px;background:#cde6cc;border:1px solid #a8c8a8"></div>
<div class="a" style="left:655px;top:56px;width:16px;height:16px;background:#f0f0f0"></div>
<svg class="a" style="left:658px;top:62px;" width="9" height="5" viewBox="0 0 9 5"><path d="M0 0H9L4.5 5Z" fill="#000"/></svg>
<svg class="a" style="left:585px;top:58px;" width="12" height="12" viewBox="0 0 12 12"><path d="M0 1H8V3H5V11H3V3H0Z" fill="#808080"/><path d="M3 3H12V5H8.5V12H6.5V5H3Z" fill="#000"/></svg>
<div class="t" style="left:600px;top:58px;"><i>宋</i><i>体</i></div>
<div class="a" style="left:674px;top:54px;width:1px;height:18px;background:#a0a0a0"></div>
<div class="a" style="left:675px;top:54px;width:1px;height:18px;background:#ffffff"></div>
<div class="a" style="left:677px;top:55px;width:59px;height:18px;background:#cde6cc;border:1px solid #a8c8a8"></div>
<div class="a" style="left:719px;top:56px;width:16px;height:16px;background:#f0f0f0"></div>
<svg class="a" style="left:722px;top:62px;" width="9" height="5" viewBox="0 0 9 5"><path d="M0 0H9L4.5 5Z" fill="#000"/></svg>
<div class="a" style="left:679px;top:57px;font-family:Liberation Sans;font-size:11px;line-height:13px">10</div>
<svg class="a" style="left:742px;top:56px;" width="17" height="16" viewBox="0 0 17 16"><rect x="5" y="1" width="8" height="8" fill="#e8c020" stroke="#000" stroke-width="0.8"/><path d="M1 14L5 3L8 14" fill="none" stroke="#0000c0" stroke-width="2"/><circle cx="11" cy="11" r="4" fill="#a0d8f0" stroke="#404040" stroke-width="0.8"/></svg>
<div class="a" style="left:772px;top:57px;font-family:Liberation Serif;font-weight:bold;font-size:14px;line-height:14px">B</div>
<svg class="a" style="left:795px;top:58px;" width="12" height="11" viewBox="0 0 12 11"><path d="M1 10.5H5M7 0.5H11M9 0.5L3 10.5" stroke="#000" stroke-width="2"/></svg>
<svg class="a" style="left:822px;top:57px;" width="11" height="13" viewBox="0 0 11 13"><path d="M1 1H4M7 1H10M2.5 1V7Q2.5 10 5.5 10Q8.5 10 8.5 7V1" fill="none" stroke="#000" stroke-width="1.6"/><path d="M1 12H10" stroke="#000" stroke-width="1.5"/></svg>
<svg class="a" style="left:848px;top:56px;" width="14" height="15" viewBox="0 0 14 15"><path d="M1 7L6 2L11 7L6 12Z" fill="#fff" stroke="#000"/><path d="M6 1V6" stroke="#0000a0" stroke-width="1.5"/><path d="M11 7Q14 9 13 11" fill="none" stroke="#0000a0" stroke-width="2"/><rect x="0" y="13" width="14" height="2" fill="#909090"/></svg>
<svg class="a" style="left:875px;top:57px;" width="12" height="14" viewBox="0 0 12 14"><path d="M1 10L6 0L11 10M3 7H9" fill="none" stroke="#000" stroke-width="1.6"/><rect x="0" y="12" width="12" height="2" fill="#e00000"/></svg>
<div class="a" style="left:894px;top:54px;width:1px;height:18px;background:#a0a0a0"></div>
<div class="a" style="left:895px;top:54px;width:1px;height:18px;background:#ffffff"></div>
<svg class="a" style="left:903px;top:59px;" width="11" height="11" viewBox="0 0 11 11"><path d="M5.5 0V11M0 5.5H11" stroke="#000" stroke-width="2"/></svg>
<svg class="a" style="left:929px;top:63px;" width="11" height="3" viewBox="0 0 11 3"><path d="M0 1.5H11" stroke="#000" stroke-width="2"/></svg>
<div class="a" style="left:951px;top:54px;width:1px;height:18px;background:#a0a0a0"></div>
<div class="a" style="left:952px;top:54px;width:1px;height:18px;background:#ffffff"></div>
<svg class="a" style="left:961px;top:55px;" width="16" height="16" viewBox="0 0 16 16"><text x="0" y="13" font-size="15" font-family="Liberation Serif" font-style="italic" fill="#303080">b</text><text x="9" y="8" font-size="9" font-family="Liberation Sans" fill="#000">2</text></svg>
<div class="a" style="left:985px;top:54px;width:1px;height:18px;background:#a0a0a0"></div>
<div class="a" style="left:986px;top:54px;width:1px;height:18px;background:#ffffff"></div>
<svg class="a" style="left:995px;top:56px;" width="16" height="16" viewBox="0 0 16 16"><path d="M5 0.5H11L15.5 5V11L11 15.5H5L0.5 11V5Z" fill="#fff" stroke="#000"/><text x="8" y="12" font-size="10" font-family="Liberation Sans" text-anchor="middle" letter-spacing="-1">1/a</text></svg>
<div class="a" style="left:1019px;top:54px;width:1px;height:18px;background:#a0a0a0"></div>
<div class="a" style="left:1020px;top:54px;width:1px;height:18px;background:#ffffff"></div>
<div class="a" style="left:1023px;top:53px;width:26px;height:22px;background:#f8f8f8;border-top:1px solid #ffffff;border-left:1px solid #ffffff;border-right:1px solid #d8d8d8;border-bottom:1px solid #d8d8d8"></div>
<div class="a" style="left:1049px;top:53px;width:26px;height:22px;background:#f8f8f8;border-top:1px solid #ffffff;border-left:1px solid #ffffff;border-right:1px solid #d8d8d8;border-bottom:1px solid #d8d8d8"></div>
<svg class="a" style="left:1030px;top:57px;" width="14" height="15" viewBox="0 0 14 15"><rect x="0.5" y="0.5" width="13" height="14" fill="none" stroke="#000" shape-rendering="crispEdges"/><path d="M2 2.5H12M2 5.5H12M2 8.5H12M7 9V12M4 11.5H10" stroke="#000" shape-rendering="crispEdges"/></svg>
<svg class="a" style="left:1056px;top:57px;" width="13" height="14" viewBox="0 0 13 14"><path d="M0 1.5H13M0 4.5H9M0 7.5H13M0 10.5H9M0 13.5H13" stroke="#000" stroke-width="1" shape-rendering="crispEdges"/></svg>
<svg class="a" style="left:1081px;top:57px;" width="13" height="14" viewBox="0 0 13 14"><path d="M0 1.5H13M2 4.5H11M0 7.5H13M2 10.5H11M0 13.5H13" stroke="#000" stroke-width="1" shape-rendering="crispEdges"/></svg>
<svg class="a" style="left:1107px;top:57px;" width="13" height="14" viewBox="0 0 13 14"><path d="M0 1.5H13M4 4.5H13M0 7.5H13M4 10.5H13M0 13.5H13" stroke="#000" stroke-width="1" shape-rendering="crispEdges"/></svg>
<svg class="a" style="left:1133px;top:57px;" width="13" height="14" viewBox="0 0 13 14"><path d="M0 1.5H13M0 4.5H5M8 4.5H13M0 7.5H13M0 10.5H5M8 10.5H13M0 13.5H13" stroke="#000" stroke-width="1" shape-rendering="crispEdges"/></svg>
<div class="a" style="left:1156px;top:54px;width:1px;height:18px;background:#a0a0a0"></div>
<div class="a" style="left:1157px;top:54px;width:1px;height:18px;background:#ffffff"></div>
<div class="a" style="left:1161px;top:53px;width:26px;height:22px;background:#f8f8f8;border-top:1px solid #ffffff;border-left:1px solid #ffffff;border-right:1px solid #d8d8d8;border-bottom:1px solid #d8d8d8"></div>
<svg class="a" style="left:1169px;top:57px;" width="14" height="14" viewBox="0 0 14 14"><path d="M0.5 0V14" stroke="#000" stroke-width="1" shape-rendering="crispEdges"/><path d="M3.5 0V14" stroke="#000" stroke-width="1" shape-rendering="crispEdges"/><path d="M5.5 0V14" stroke="#000" stroke-width="1" shape-rendering="crispEdges"/><path d="M8.5 0V14" stroke="#000" stroke-width="1" shape-rendering="crispEdges"/><path d="M11.5 0V14" stroke="#000" stroke-width="1" shape-rendering="crispEdges"/><path d="M13.5 0V14" stroke="#000" stroke-width="1" shape-rendering="crispEdges"/></svg>
<svg class="a" style="left:1193px;top:57px;" width="14" height="14" viewBox="0 0 14 14"><path d="M0.5 0V14" stroke="#000" stroke-width="1" shape-rendering="crispEdges"/><path d="M2.5 0V14" stroke="#000" stroke-width="1" shape-rendering="crispEdges"/><path d="M5.5 0V14" stroke="#000" stroke-width="1" shape-rendering="crispEdges"/><path d="M7.5 0V14" stroke="#000" stroke-width="1" shape-rendering="crispEdges"/><path d="M10.5 0V14" stroke="#000" stroke-width="1" shape-rendering="crispEdges"/><path d="M12.5 0V14" stroke="#000" stroke-width="1" shape-rendering="crispEdges"/></svg>
<svg class="a" style="left:1219px;top:57px;" width="14" height="14" viewBox="0 0 14 14"><path d="M0.5 0V14" stroke="#000" stroke-width="1" shape-rendering="crispEdges"/><path d="M2.5 0V14" stroke="#000" stroke-width="1" shape-rendering="crispEdges"/><path d="M4.5 0V14" stroke="#000" stroke-width="1" shape-rendering="crispEdges"/><path d="M7.5 0V14" stroke="#000" stroke-width="1" shape-rendering="crispEdges"/><path d="M9.5 0V14" stroke="#000" stroke-width="1" shape-rendering="crispEdges"/><path d="M11.5 0V14" stroke="#000" stroke-width="1" shape-rendering="crispEdges"/><path d="M13.5 0V14" stroke="#000" stroke-width="1" shape-rendering="crispEdges"/></svg>
<svg class="a" style="left:448px;top:80px;" width="17" height="16" viewBox="0 0 17 16"><rect x="0.5" y="0.5" width="6" height="4" fill="#ffff00" stroke="#000"/><rect x="0.5" y="10.5" width="6" height="4" fill="#ffff00" stroke="#000"/><path d="M6 2H7V12H6" fill="none" stroke="#000"/><path d="M8 7H12M12 5H16V9H12" stroke="#000" fill="none"/><path d="M7 7L10 4.5V9.5Z" fill="#0000a0"/></svg>
<svg class="a" style="left:473px;top:80px;" width="17" height="16" viewBox="0 0 17 16"><rect x="0.5" y="0.5" width="13" height="5" fill="#fff" stroke="#000"/><path d="M5 0.5V15M9 0.5V5" stroke="#000"/><rect x="5" y="1" width="4" height="8" fill="#ffff00"/><path d="M5 15V11Q7 8 9 11V15" stroke="#000" fill="none"/><circle cx="7" cy="10" r="0.8" fill="#e00000"/></svg>
<div class="a" style="left:498px;top:80px;width:17px;height:17px;background:#c8c8c8"></div>
<svg class="a" style="left:498px;top:80px;" width="17" height="16" viewBox="0 0 17 16"><rect x="0.5" y="1.5" width="7" height="4" fill="#ffff00" stroke="#000"/><rect x="0.5" y="10.5" width="7" height="4" fill="#ffff00" stroke="#000"/><rect x="0.5" y="6" width="10" height="3" fill="#e0e0e0"/><path d="M7 7.5H13" stroke="#000"/><path d="M16 7.5L12 4.5V10.5Z" fill="#0000a0"/></svg>
<svg class="a" style="left:524px;top:80px;" width="17" height="16" viewBox="0 0 17 16"><rect x="0.5" y="0.5" width="4" height="4" fill="#ffff00" stroke="#000"/><rect x="9.5" y="0.5" width="4" height="4" fill="#ffff00" stroke="#000"/><path d="M7 3V8M4 15V10H10V15" stroke="#000" fill="none"/><path d="M7 2L5 5H9Z" fill="#0000a0"/></svg>
<svg class="a" style="left:548px;top:80px;" width="17" height="16" viewBox="0 0 17 16"><rect x="0.5" y="0.5" width="9" height="14" fill="#fff" stroke="#000"/><path d="M5 0.5V15M0.5 5H9.5" stroke="#000"/><rect x="1" y="6" width="4" height="8" fill="#ffff00"/><path d="M8 8H15M8 11H15" stroke="#000"/><path d="M6 9.5L9 7.5V11.5Z" fill="#e00000"/></svg>
<svg class="a" style="left:574px;top:80px;" width="17" height="16" viewBox="0 0 17 16"><rect x="0.5" y="0.5" width="3" height="5" fill="#ffff00" stroke="#000"/><rect x="10.5" y="0.5" width="3" height="5" fill="#ffff00" stroke="#000"/><path d="M2 5L7 9L12 5M7 9V13" stroke="#000" fill="none" stroke-width="1.2"/><path d="M4 12H10L7 15Z" fill="#0000a0"/></svg>
<svg class="a" style="left:600px;top:80px;" width="17" height="16" viewBox="0 0 17 16"><rect x="0.5" y="0.5" width="11" height="6" fill="#d8d8d8" stroke="#a0a0a0"/><rect x="0.5" y="8.5" width="11" height="6" fill="#d8d8d8" stroke="#a0a0a0"/><path d="M12 4H14V13H12" stroke="#a0a0a0" fill="none"/></svg>
<svg class="a" style="left:625px;top:80px;" width="17" height="16" viewBox="0 0 17 16"><rect x="0.5" y="0.5" width="10" height="4" fill="#ffff00" stroke="#000"/><rect x="0.5" y="6.5" width="10" height="8" fill="#ffff00" stroke="#000"/><path d="M4 6.5V15M7 6.5V15M0.5 10.5H11" stroke="#000"/><path d="M11 3H13V12H11" stroke="#000" fill="none"/></svg>
<svg class="a" style="left:649px;top:80px;" width="17" height="16" viewBox="0 0 17 16"><path d="M3 7V4Q3 1 6 1Q9 1 9 4V7" stroke="#000" fill="none" stroke-width="1.5"/><rect x="0.5" y="6.5" width="11" height="9" fill="#ffff00" stroke="#000"/><rect x="5" y="9" width="2" height="4" fill="#0000a0"/></svg>
<div class="a" style="left:670px;top:80px;width:1px;height:18px;background:#a0a0a0"></div>
<div class="a" style="left:671px;top:80px;width:1px;height:18px;background:#ffffff"></div>
<svg class="a" style="left:678px;top:80px;" width="17" height="16" viewBox="0 0 17 16"><path d="M3.5 2V14" stroke="#4060a0" stroke-width="1"/><path d="M1 4.5L3.5 1L6 4.5ZM1 11.5L3.5 15L6 11.5Z" fill="#4060a0" style="shape-rendering:auto"/><path d="M7 2.5H14M7 6.5H14M7 9.5H14M7 13.5H14" stroke="#000" stroke-width="1"/></svg>
<svg class="a" style="left:703px;top:80px;" width="17" height="16" viewBox="0 0 17 16"><path d="M3.5 1V15" stroke="#a0a0a0" stroke-width="1"/><path d="M1 5L3.5 8L6 5ZM1 11L3.5 8L6 11Z" fill="#a0a0a0" style="shape-rendering:auto"/><path d="M7 2.5H14M7 6.5H14M7 9.5H14M7 13.5H14" stroke="#a0a0a0" stroke-width="1"/></svg>
<svg class="a" style="left:728px;top:80px;" width="17" height="16" viewBox="0 0 17 16"><path d="M2 2L8 9M4 1L10 8" stroke="#b0b0b0" stroke-width="1.3"/><circle cx="11" cy="11" r="3" fill="none" stroke="#b0b0b0"/></svg>
<div class="a" style="left:749px;top:80px;width:1px;height:18px;background:#a0a0a0"></div>
<div class="a" style="left:750px;top:80px;width:1px;height:18px;background:#ffffff"></div>
<svg class="a" style="left:755px;top:80px;" width="17" height="16" viewBox="0 0 17 16"><path d="M0 0L4 4H0Z" fill="#000"/><rect x="2.5" y="4.5" width="13" height="11" fill="#ffff80" stroke="#000"/><path d="M3 15L8 10L12 13L15 11V15Z" fill="#808080"/><circle cx="12" cy="7.5" r="1.3" fill="none" stroke="#000"/></svg>
<svg class="a" style="left:780px;top:86px;" width="9" height="5" viewBox="0 0 9 5"><path d="M0 0H9L4.5 5Z" fill="#000"/></svg>
<div class="a" style="left:794px;top:80px;width:1px;height:18px;background:#a0a0a0"></div>
<div class="a" style="left:795px;top:80px;width:1px;height:18px;background:#ffffff"></div>
<svg class="a" style="left:800px;top:80px;" width="17" height="16" viewBox="0 0 17 16"><rect x="5.5" y="5.5" width="10" height="10" fill="#fff" stroke="#000"/><path d="M8 9H13M8 12H13M10 6V15" stroke="#000"/><path d="M6 0L1 8H5L2 13L9 5H5L8 0Z" fill="#ffff00" stroke="#000" stroke-width="0.6"/><path d="M9 2H15V5" stroke="#0000a0" fill="none" stroke-width="1.5"/></svg>
<div class="a" style="left:826px;top:80px;font-family:Liberation Serif;font-size:15px;line-height:16px">&#931;</div>
<svg class="a" style="left:850px;top:86px;" width="9" height="5" viewBox="0 0 9 5"><path d="M0 0H9L4.5 5Z" fill="#000"/></svg>
<div class="a" style="left:864px;top:80px;width:1px;height:18px;background:#a0a0a0"></div>
<div class="a" style="left:865px;top:80px;width:1px;height:18px;background:#ffffff"></div>
<div class="a" style="left:867px;top:79px;width:67px;height:18px;background:#cde6cc;border:1px solid #a8c8a8"></div>
<div class="a" style="left:917px;top:80px;width:16px;height:16px;background:#f0f0f0"></div>
<svg class="a" style="left:920px;top:86px;" width="9" height="5" viewBox="0 0 9 5"><path d="M0 0H9L4.5 5Z" fill="#000"/></svg>
<div class="a" style="left:870px;top:82px;font-family:Liberation Sans;font-size:10px;line-height:13px;letter-spacing:-0.2px">100%</div>
<div class="a" style="left:936px;top:80px;width:1px;height:18px;background:#a0a0a0"></div>
<div class="a" style="left:937px;top:80px;width:1px;height:18px;background:#ffffff"></div>
<div class="a" style="left:939px;top:79px;width:80px;height:18px;background:#cde6cc;border:1px solid #a8c8a8"></div>
<div class="a" style="left:942px;top:81px;width:59px;height:13px;background:#ffffff"></div>
<div class="a" style="left:945px;top:87px;width:53px;height:1px;background:#000"></div>
<div class="a" style="left:1002px;top:80px;width:16px;height:16px;background:#f0f0f0;border-left:1px solid #c8dcc8"></div>
<svg class="a" style="left:1005px;top:86px;" width="9" height="5" viewBox="0 0 9 5"><path d="M0 0H9L4.5 5Z" fill="#000"/></svg>
<svg class="a" style="left:1025px;top:81px;" width="14" height="14" viewBox="0 0 14 14"><rect x="1" y="1" width="12" height="12" fill="none" stroke="#1060d0" stroke-width="2"/><path d="M1 1L13 13" stroke="#000060" stroke-width="1.6"/></svg>
<svg class="a" style="left:1049px;top:86px;" width="9" height="5" viewBox="0 0 9 5"><path d="M0 0H9L4.5 5Z" fill="#000"/></svg>
<svg class="a" style="left:1067px;top:81px;" width="14" height="14" viewBox="0 0 14 14"><rect x="1" y="1" width="12" height="12" fill="none" stroke="#1060d0" stroke-width="2"/><path d="M1 1L13 13" stroke="#c0c0c0" stroke-width="1"/></svg>
<svg class="a" style="left:1091px;top:86px;" width="9" height="5" viewBox="0 0 9 5"><path d="M0 0H9L4.5 5Z" fill="#000"/></svg>
<svg class="a" style="left:450px;top:105px;" width="14" height="17" viewBox="0 0 14 17"><text x="0.5" y="8" font-size="9" font-family="Liberation Sans" stroke="#000" stroke-width="0.3">1</text><text x="3.5" y="12" font-size="9" font-family="Liberation Sans" stroke="#000" stroke-width="0.3">2</text><text x="7" y="16" font-size="9" font-family="Liberation Sans" stroke="#000" stroke-width="0.3">3</text></svg>
<div class="t" style="left:467px;top:108px;"><i>随</i><i>机</i><i>数</i></div>
<svg class="a" style="left:526px;top:107px;" width="12" height="13" viewBox="0 0 12 13"><path d="M6 0V13M3 13H9" stroke="#000" stroke-width="1.6"/><ellipse cx="6" cy="6.5" rx="5" ry="3.5" fill="none" stroke="#000" stroke-width="1.5"/></svg>
<div class="t" style="left:542px;top:108px;"><i>特</i><i>殊</i><i>符</i><i>号</i></div>
<div class="a" style="left:600px;top:105px;font-family:Liberation Serif;font-size:18px;line-height:18px;letter-spacing:-1px;transform:scaleX(0.62);transform-origin:0 0">NO</div>
<div class="t" style="left:617px;top:108px;"><i>重</i><i>新</i><i>编</i><i>号</i></div>
<svg class="a" style="left:675px;top:107px;" width="13" height="13" viewBox="0 0 13 13"><path d="M3 1H7Q12 1 12 6.5Q12 12 7 12H3Z" fill="none" stroke="#000" stroke-width="2"/><path d="M4 1V12" stroke="#000" stroke-width="2.5"/><path d="M0 6.5H13" stroke="#000" stroke-width="1.5"/></svg>
<div class="t" style="left:692px;top:108px;"><i>画</i><i>删</i><i>除</i><i>线</i></div>
<svg class="a" style="left:748px;top:111px;" width="9" height="5" viewBox="0 0 9 5"><path d="M0 0H9L4.5 5Z" fill="#000"/></svg>
<div class="a" style="left:433px;top:127px;width:1266px;height:1px;background:#707070"></div>
<div class="a" style="left:434px;top:128px;width:1265px;height:841px;background:#f0f0f0"></div>
<div class="a" style="left:434px;top:128px;width:736px;height:18px;background:#f0f0f0"></div>
<div class="a" style="left:434px;top:146px;width:37px;height:1px;background:#a0a0a0"></div>
<div class="a" style="left:466px;top:128px;width:1px;height:263px;background:#a0a0a0"></div>
<div class="a" style="left:466px;top:852px;width:1px;height:117px;background:#a0a0a0"></div>
<svg class="a" style="left:453px;top:131px;" width="13" height="15" viewBox="0 0 13 15"><path d="M0 15L13 2M4 15L13 6M8 15L13 10" stroke="#a0a0a0" stroke-width="1.2"/></svg>
<div class="a" style="left:471px;top:128px;width:1px;height:18px;background:#a0a0a0"></div>
<div class="a" style="left:486px;top:128px;width:1px;height:18px;background:#b8b4a0"></div>
<div class="hd" style="left:472px;top:128px;width:14px;height:18px">B</div>
<div class="a" style="left:513px;top:128px;width:1px;height:18px;background:#b8b4a0"></div>
<div class="hd" style="left:487px;top:128px;width:26px;height:18px">C</div>
<div class="a" style="left:528px;top:128px;width:1px;height:18px;background:#b8b4a0"></div>
<div class="hd" style="left:514px;top:128px;width:14px;height:18px">D</div>
<div class="a" style="left:543px;top:128px;width:1px;height:18px;background:#b8b4a0"></div>
<div class="hd" style="left:529px;top:128px;width:14px;height:18px">E</div>
<div class="a" style="left:558px;top:128px;width:1px;height:18px;background:#b8b4a0"></div>
<div class="hd" style="left:544px;top:128px;width:14px;height:18px">F</div>
<div class="a" style="left:573px;top:128px;width:1px;height:18px;background:#b8b4a0"></div>
<div class="hd" style="left:559px;top:128px;width:14px;height:18px">G</div>
<div class="a" style="left:588px;top:128px;width:1px;height:18px;background:#b8b4a0"></div>
<div class="hd" style="left:574px;top:128px;width:14px;height:18px">H</div>
<div class="a" style="left:603px;top:128px;width:1px;height:18px;background:#b8b4a0"></div>
<div class="hd" style="left:589px;top:128px;width:14px;height:18px">I</div>
<div class="a" style="left:618px;top:128px;width:1px;height:18px;background:#b8b4a0"></div>
<div class="hd" style="left:604px;top:128px;width:14px;height:18px">J</div>
<div class="a" style="left:633px;top:128px;width:1px;height:18px;background:#b8b4a0"></div>
<div class="hd" style="left:619px;top:128px;width:14px;height:18px">K</div>
<div class="a" style="left:648px;top:128px;width:1px;height:18px;background:#b8b4a0"></div>
<div class="hd" style="left:634px;top:128px;width:14px;height:18px">L</div>
<div class="a" style="left:663px;top:128px;width:1px;height:18px;background:#b8b4a0"></div>
<div class="hd" style="left:649px;top:128px;width:14px;height:18px">M</div>
<div class="a" style="left:678px;top:128px;width:1px;height:18px;background:#b8b4a0"></div>
<div class="hd" style="left:664px;top:128px;width:14px;height:18px">N</div>
<div class="a" style="left:693px;top:128px;width:1px;height:18px;background:#b8b4a0"></div>
<div class="hd" style="left:679px;top:128px;width:14px;height:18px">O</div>
<div class="a" style="left:709px;top:128px;width:1px;height:18px;background:#b8b4a0"></div>
<div class="hd" style="left:694px;top:128px;width:15px;height:18px">P</div>
<div class="a" style="left:724px;top:128px;width:1px;height:18px;background:#b8b4a0"></div>
<div class="hd" style="left:710px;top:128px;width:14px;height:18px">Q</div>
<div class="a" style="left:739px;top:128px;width:1px;height:18px;background:#b8b4a0"></div>
<div class="hd" style="left:725px;top:128px;width:14px;height:18px">R</div>
<div class="a" style="left:754px;top:128px;width:1px;height:18px;background:#b8b4a0"></div>
<div class="hd" style="left:740px;top:128px;width:14px;height:18px">S</div>
<div class="a" style="left:769px;top:128px;width:1px;height:18px;background:#b8b4a0"></div>
<div class="hd" style="left:755px;top:128px;width:14px;height:18px">T</div>
<div class="a" style="left:784px;top:128px;width:1px;height:18px;background:#b8b4a0"></div>
<div class="hd" style="left:770px;top:128px;width:14px;height:18px">U</div>
<div class="a" style="left:807px;top:128px;width:1px;height:18px;background:#b8b4a0"></div>
<div class="hd" style="left:785px;top:128px;width:22px;height:18px">V</div>
<div class="a" style="left:822px;top:128px;width:1px;height:18px;background:#b8b4a0"></div>
<div class="hd" style="left:808px;top:128px;width:14px;height:18px">W</div>
<div class="a" style="left:837px;top:128px;width:1px;height:18px;background:#b8b4a0"></div>
<div class="hd" style="left:823px;top:128px;width:14px;height:18px">X</div>
<div class="a" style="left:852px;top:128px;width:1px;height:18px;background:#b8b4a0"></div>
<div class="hd" style="left:838px;top:128px;width:14px;height:18px">Y</div>
<div class="a" style="left:867px;top:128px;width:1px;height:18px;background:#b8b4a0"></div>
<div class="hd" style="left:853px;top:128px;width:14px;height:18px">Z</div>
<div class="a" style="left:882px;top:128px;width:1px;height:18px;background:#b8b4a0"></div>
<div class="hd" style="left:868px;top:128px;width:14px;height:18px"><span style="display:inline-block;transform:scaleX(0.62);letter-spacing:-1px">AA</span></div>
<div class="a" style="left:897px;top:128px;width:1px;height:18px;background:#b8b4a0"></div>
<div class="hd" style="left:883px;top:128px;width:14px;height:18px"><span style="display:inline-block;transform:scaleX(0.62);letter-spacing:-1px">AB</span></div>
<div class="a" style="left:912px;top:128px;width:1px;height:18px;background:#b8b4a0"></div>
<div class="hd" style="left:898px;top:128px;width:14px;height:18px"><span style="display:inline-block;transform:scaleX(0.62);letter-spacing:-1px">AC</span></div>
<div class="a" style="left:927px;top:128px;width:1px;height:18px;background:#b8b4a0"></div>
<div class="hd" style="left:913px;top:128px;width:14px;height:18px"><span style="display:inline-block;transform:scaleX(0.62);letter-spacing:-1px">AD</span></div>
<div class="a" style="left:942px;top:128px;width:1px;height:18px;background:#b8b4a0"></div>
<div class="hd" style="left:928px;top:128px;width:14px;height:18px"><span style="display:inline-block;transform:scaleX(0.62);letter-spacing:-1px">AE</span></div>
<div class="a" style="left:957px;top:128px;width:1px;height:18px;background:#b8b4a0"></div>
<div class="hd" style="left:943px;top:128px;width:14px;height:18px"><span style="display:inline-block;transform:scaleX(0.62);letter-spacing:-1px">AF</span></div>
<div class="a" style="left:980px;top:128px;width:1px;height:18px;background:#b8b4a0"></div>
<div class="hd" style="left:958px;top:128px;width:22px;height:18px">AG</div>
<div class="a" style="left:995px;top:128px;width:1px;height:18px;background:#b8b4a0"></div>
<div class="hd" style="left:981px;top:128px;width:14px;height:18px"><span style="display:inline-block;transform:scaleX(0.62);letter-spacing:-1px">AH</span></div>
<div class="a" style="left:1010px;top:128px;width:1px;height:18px;background:#b8b4a0"></div>
<div class="hd" style="left:996px;top:128px;width:14px;height:18px"><span style="display:inline-block;transform:scaleX(0.62);letter-spacing:-1px">AI</span></div>
<div class="a" style="left:1025px;top:128px;width:1px;height:18px;background:#b8b4a0"></div>
<div class="hd" style="left:1011px;top:128px;width:14px;height:18px"><span style="display:inline-block;transform:scaleX(0.62);letter-spacing:-1px">AJ</span></div>
<div class="a" style="left:1040px;top:128px;width:1px;height:18px;background:#b8b4a0"></div>
<div class="hd" style="left:1026px;top:128px;width:14px;height:18px"><span style="display:inline-block;transform:scaleX(0.62);letter-spacing:-1px">AK</span></div>
<div class="a" style="left:1055px;top:128px;width:1px;height:18px;background:#b8b4a0"></div>
<div class="hd" style="left:1041px;top:128px;width:14px;height:18px"><span style="display:inline-block;transform:scaleX(0.62);letter-spacing:-1px">AL</span></div>
<div class="a" style="left:1070px;top:128px;width:1px;height:18px;background:#b8b4a0"></div>
<div class="hd" style="left:1056px;top:128px;width:14px;height:18px"><span style="display:inline-block;transform:scaleX(0.62);letter-spacing:-1px">AM</span></div>
<div class="a" style="left:1085px;top:128px;width:1px;height:18px;background:#b8b4a0"></div>
<div class="hd" style="left:1071px;top:128px;width:14px;height:18px"><span style="display:inline-block;transform:scaleX(0.62);letter-spacing:-1px">AN</span></div>
<div class="a" style="left:1100px;top:128px;width:1px;height:18px;background:#b8b4a0"></div>
<div class="hd" style="left:1086px;top:128px;width:14px;height:18px"><span style="display:inline-block;transform:scaleX(0.62);letter-spacing:-1px">AO</span></div>
<div class="a" style="left:1115px;top:128px;width:1px;height:18px;background:#b8b4a0"></div>
<div class="hd" style="left:1101px;top:128px;width:14px;height:18px"><span style="display:inline-block;transform:scaleX(0.62);letter-spacing:-1px">AP</span></div>
<div class="a" style="left:1130px;top:128px;width:1px;height:18px;background:#b8b4a0"></div>
<div class="hd" style="left:1116px;top:128px;width:14px;height:18px"><span style="display:inline-block;transform:scaleX(0.62);letter-spacing:-1px">AQ</span></div>
<div class="a" style="left:1145px;top:128px;width:1px;height:18px;background:#b8b4a0"></div>
<div class="hd" style="left:1131px;top:128px;width:14px;height:18px"><span style="display:inline-block;transform:scaleX(0.62);letter-spacing:-1px">AR</span></div>
<div class="a" style="left:1156px;top:128px;width:1px;height:18px;background:#b8b4a0"></div>
<div class="hd" style="left:1146px;top:128px;width:10px;height:18px"><span style="display:inline-block;transform:scaleX(0.62);letter-spacing:-1px">AS</span></div>
<div class="a" style="left:1166px;top:128px;width:1px;height:18px;background:#b8b4a0"></div>
<div class="hd" style="left:1157px;top:128px;width:9px;height:18px"><span style="display:inline-block;transform:scaleX(0.62);letter-spacing:-1px">AT</span></div>
<div class="a" style="left:1166px;top:128px;width:1px;height:18px;background:#f8f8f8"></div>
<div class="a" style="left:1170px;top:128px;width:1px;height:19px;background:#a0a0a0"></div>
<div class="a" style="left:1165px;top:146px;width:5px;height:1px;background:#a0a0a0"></div>
<div class="a" style="left:434px;top:151px;width:32px;height:1px;background:#a0a0a0"></div>
<div class="a" style="left:449px;top:149px;width:1px;height:2px;background:#000"></div>
<div class="a" style="left:434px;top:181px;width:32px;height:1px;background:#a0a0a0"></div>
<div class="rn" style="left:434px;top:153px;height:30px;line-height:30px;font-family:Liberation Mono;font-size:12px;overflow:hidden">2</div>
<div class="a" style="left:434px;top:211px;width:32px;height:1px;background:#a0a0a0"></div>
<div class="rn" style="left:434px;top:183px;height:30px;line-height:30px;font-family:Liberation Mono;font-size:12px;overflow:hidden">3</div>
<div class="a" style="left:434px;top:241px;width:32px;height:1px;background:#a0a0a0"></div>
<div class="rn" style="left:434px;top:213px;height:30px;line-height:30px;font-family:Liberation Mono;font-size:12px;overflow:hidden">4</div>
<div class="a" style="left:434px;top:276px;width:32px;height:1px;background:#a0a0a0"></div>
<div class="rn" style="left:434px;top:243px;height:35px;line-height:35px;font-family:Liberation Mono;font-size:12px;overflow:hidden">5</div>
<div class="a" style="left:434px;top:286px;width:32px;height:1px;background:#a0a0a0"></div>
<div class="rn" style="left:434px;top:278px;height:10px;line-height:10px;font-family:Liberation Mono;font-size:12px;overflow:hidden">6</div>
<div class="a" style="left:434px;top:336px;width:32px;height:1px;background:#a0a0a0"></div>
<div class="rn" style="left:434px;top:288px;height:50px;line-height:50px;font-family:Liberation Mono;font-size:12px;overflow:hidden">7</div>
<div class="a" style="left:434px;top:371px;width:32px;height:1px;background:#a0a0a0"></div>
<div class="rn" style="left:434px;top:338px;height:35px;line-height:35px;font-family:Liberation Mono;font-size:12px;overflow:hidden">8</div>
<div class="a" style="left:434px;top:391px;width:32px;height:1px;background:#a0a0a0"></div>
<div class="rn" style="left:434px;top:373px;height:20px;line-height:20px;font-family:Liberation Mono;font-size:12px;overflow:hidden">9</div>
<div class="a" style="left:434px;top:426px;width:32px;height:1px;background:#b8b4a0"></div>
<div class="rn" style="left:434px;top:391px;height:35px;line-height:35px;font-weight:bold;font-family:Liberation Sans;font-size:13px;overflow:hidden">10</div>
<div class="a" style="left:434px;top:461px;width:32px;height:1px;background:#b8b4a0"></div>
<div class="rn" style="left:434px;top:426px;height:35px;line-height:35px;font-weight:bold;font-family:Liberation Sans;font-size:13px;overflow:hidden">11</div>
<div class="a" style="left:434px;top:496px;width:32px;height:1px;background:#b8b4a0"></div>
<div class="rn" style="left:434px;top:461px;height:35px;line-height:35px;font-weight:bold;font-family:Liberation Sans;font-size:13px;overflow:hidden">12</div>
<div class="a" style="left:434px;top:531px;width:32px;height:1px;background:#b8b4a0"></div>
<div class="rn" style="left:434px;top:496px;height:35px;line-height:35px;font-weight:bold;font-family:Liberation Sans;font-size:13px;overflow:hidden">13</div>
<div class="a" style="left:434px;top:566px;width:32px;height:1px;background:#b8b4a0"></div>
<div class="rn" style="left:434px;top:531px;height:35px;line-height:35px;font-weight:bold;font-family:Liberation Sans;font-size:13px;overflow:hidden">14</div>
<div class="a" style="left:434px;top:601px;width:32px;height:1px;background:#b8b4a0"></div>
<div class="rn" style="left:434px;top:566px;height:35px;line-height:35px;font-weight:bold;font-family:Liberation Sans;font-size:13px;overflow:hidden">15</div>
<div class="a" style="left:434px;top:636px;width:32px;height:1px;background:#b8b4a0"></div>
<div class="rn" style="left:434px;top:601px;height:35px;line-height:35px;font-weight:bold;font-family:Liberation Sans;font-size:13px;overflow:hidden">16</div>
<div class="a" style="left:434px;top:671px;width:32px;height:1px;background:#b8b4a0"></div>
<div class="rn" style="left:434px;top:636px;height:35px;line-height:35px;font-weight:bold;font-family:Liberation Sans;font-size:13px;overflow:hidden">17</div>
<div class="a" style="left:434px;top:706px;width:32px;height:1px;background:#b8b4a0"></div>
<div class="rn" style="left:434px;top:671px;height:35px;line-height:35px;font-weight:bold;font-family:Liberation Sans;font-size:13px;overflow:hidden">18</div>
<div class="a" style="left:434px;top:726px;width:32px;height:1px;background:#b8b4a0"></div>
<div class="rn" style="left:434px;top:706px;height:20px;line-height:20px;font-weight:bold;font-family:Liberation Sans;font-size:13px;overflow:hidden">19</div>
<div class="a" style="left:434px;top:761px;width:32px;height:1px;background:#b8b4a0"></div>
<div class="rn" style="left:434px;top:726px;height:35px;line-height:35px;font-weight:bold;font-family:Liberation Sans;font-size:13px;overflow:hidden">20</div>
<div class="a" style="left:434px;top:796px;width:32px;height:1px;background:#b8b4a0"></div>
<div class="rn" style="left:434px;top:761px;height:35px;line-height:35px;font-weight:bold;font-family:Liberation Sans;font-size:13px;overflow:hidden">21</div>
<div class="a" style="left:434px;top:831px;width:32px;height:1px;background:#b8b4a0"></div>
<div class="rn" style="left:434px;top:796px;height:35px;line-height:35px;font-weight:bold;font-family:Liberation Sans;font-size:13px;overflow:hidden">22</div>
<div class="a" style="left:434px;top:852px;width:32px;height:1px;background:#b8b4a0"></div>
<div class="rn" style="left:434px;top:831px;height:21px;line-height:21px;font-weight:bold;font-family:Liberation Sans;font-size:13px;overflow:hidden">23</div>
<div class="a" style="left:434px;top:886px;width:32px;height:1px;background:#a0a0a0"></div>
<div class="rn" style="left:434px;top:854px;height:34px;line-height:34px;font-family:Liberation Mono;font-size:12px;overflow:hidden">24</div>
<div class="a" style="left:434px;top:921px;width:32px;height:1px;background:#a0a0a0"></div>
<div class="rn" style="left:434px;top:888px;height:35px;line-height:35px;font-family:Liberation Mono;font-size:12px;overflow:hidden">25</div>
<div class="a" style="left:434px;top:945px;width:32px;height:1px;background:#a0a0a0"></div>
<div class="rn" style="left:434px;top:923px;height:24px;line-height:24px;font-family:Liberation Mono;font-size:12px;overflow:hidden">26</div>
<div class="a" style="left:434px;top:969px;width:32px;height:1px;background:#a0a0a0"></div>
<div class="rn" style="left:434px;top:949px;height:35px;line-height:35px;font-family:Liberation Mono;font-size:12px;overflow:hidden">27</div>
<div class="a" style="left:467px;top:147px;width:703px;height:822px;background:#f0f0f0"></div>
<div class="a" style="left:467px;top:147px;width:699px;height:4px;background:#e6e6e6"></div>
<div class="a" style="left:467px;top:151px;width:699px;height:1px;background:#f4f4f4"></div>
<div class="a" style="left:467px;top:152px;width:5px;height:817px;background:#e2e2e2"></div>
<div class="a" style="left:472px;top:152px;width:693px;height:817px;background:#e0e0e0"></div>
<div class="a" style="left:1166px;top:147px;width:1px;height:822px;background:#f4f4f4"></div>
<div class="a" style="left:1167px;top:147px;width:3px;height:822px;background:#e2e2e2"></div>
<div class="a" style="left:466px;top:391px;width:4px;height:461px;background:#dedede"></div>
<div class="a" style="left:472px;top:152px;width:1px;height:240px;background:#f4f4f4"></div>
<div class="a" style="left:472px;top:181px;width:693px;height:1px;background:#f4f4f4"></div>
<div class="a" style="left:472px;top:241px;width:693px;height:1px;background:#f4f4f4"></div>
<div class="a" style="left:472px;top:277px;width:693px;height:1px;background:#f4f4f4"></div>
<div class="a" style="left:1165px;top:152px;width:1px;height:240px;background:#f4f4f4"></div>
<div class="a" style="left:1108px;top:157px;font-family:Liberation Serif;font-size:18px;line-height:20px;white-space:nowrap;-webkit-text-stroke:0.3px #000">C</div>
<div class="a" style="left:1120px;top:157px;font-family:Liberation Serif;font-size:18px;line-height:20px;white-space:nowrap;-webkit-text-stroke:0.3px #000">.</div>
<div class="a" style="left:1131px;top:157px;font-family:Liberation Serif;font-size:18px;line-height:20px;white-space:nowrap;-webkit-text-stroke:0.3px #000">0</div>
<div class="a" style="left:1142px;top:157px;font-family:Liberation Serif;font-size:18px;line-height:20px;white-space:nowrap;-webkit-text-stroke:0.3px #000">.</div>
<div class="a" style="left:1153px;top:157px;font-family:Liberation Serif;font-size:18px;line-height:20px;white-space:nowrap;-webkit-text-stroke:0.3px #000">1</div>
<div class="t" style="left:764px;top:200px;height:22px;line-height:22px;font-size:21px"><i style="width:21.6px;height:22px">工</i><i style="width:21.6px;height:22px">程</i><i style="width:21.6px;height:22px">联</i><i style="width:21.6px;height:22px">系</i><i style="width:21.6px;height:22px">单</i></div>
<div class="t" style="left:506px;top:263px;"><i>工</i><i>程</i><i>名</i><i>称</i><i>：</i></div>
<div class="a" style="left:603px;top:242px;width:324px;height:34px;background:#f0c8a4"></div>
<div class="a" style="left:603px;top:276px;width:324px;height:1px;background:#000"></div>
<div class="t" style="left:752px;top:263px;"><i>江</i><i>苏</i></div>
<div class="t" style="left:980px;top:263px;"><i>编</i><i>号</i><i>：</i></div>
<div class="a" style="left:1016px;top:263px;font-family:Liberation Mono;font-size:11px;line-height:12px;letter-spacing:0.4px">C.0.1</div>
<div class="a" style="left:1055px;top:242px;width:30px;height:34px;background:#ffffff"></div>
<div class="a" style="left:1055px;top:276px;width:30px;height:1px;background:#000"></div>
<div class="a" style="left:1096px;top:267px;width:9px;height:1px;background:#000"></div>
<div class="a" style="left:1115px;top:242px;width:50px;height:34px;background:#ffffff"></div>
<div class="a" style="left:1115px;top:276px;width:50px;height:1px;background:#000"></div>
<div class="a" style="left:472px;top:284px;width:693px;height:1px;background:#f4f4f4"></div>
<div class="a" style="left:470px;top:285px;width:696px;height:2px;background:#000"></div>
<div class="a" style="left:470px;top:285px;width:2px;height:107px;background:#000"></div>
<div class="a" style="left:1164px;top:285px;width:2px;height:105px;background:#000"></div>
<div class="a" style="left:589px;top:287px;width:308px;height:49px;background:#ffffff"></div>
<div class="a" style="left:588px;top:287px;width:1px;height:49px;background:#000"></div>
<div class="a" style="left:897px;top:287px;width:1px;height:49px;background:#000"></div>
<div class="a" style="left:1025px;top:287px;width:1px;height:49px;background:#000"></div>
<div class="a" style="left:1026px;top:287px;width:138px;height:49px;background:#ffffff"></div>
<div class="a" style="left:472px;top:336px;width:692px;height:1px;background:#000"></div>
<div class="t" style="left:518px;top:306px;"><i>事</i><i>由</i></div>
<div class="t" style="left:929px;top:298px"><i style="width:13px">签</i><i style="width:13px">收</i><i style="width:13px">人</i><i style="width:13px">姓</i><i style="width:13px">名</i></div>
<div class="t" style="left:942px;top:311px"><i style="width:13px">及</i><i style="width:13px">时</i><i style="width:13px">间</i></div>
<div class="t" style="left:491px;top:357px;"><i>致</i><i>：</i></div>
<div class="a" style="left:528px;top:337px;width:226px;height:34px;background:#ffffff"></div>
<div class="a" style="left:528px;top:371px;width:226px;height:1px;background:#000"></div>
<div class="a" style="left:472px;top:372px;width:692px;height:1px;background:#f4f4f4"></div>
<div class="a" style="left:470px;top:390px;width:696px;height:3px;background:#000"></div>
<div class="a" style="left:473px;top:393px;width:692px;height:457px;background:#ffffff"></div>
<div class="a" style="left:472px;top:393px;width:1px;height:457px;background:#000"></div>
<div class="a" style="left:1166px;top:390px;width:1px;height:460px;background:#000"></div>
<div class="a" style="left:470px;top:393px;width:2px;height:457px;background:#ffffff"></div>
<div class="a" style="left:470px;top:850px;width:693px;height:3px;background:#000"></div>
<svg class="a" style="left:1163px;top:848px;" width="6" height="7" viewBox="0 0 6 7"><rect x="0.5" y="0.5" width="4" height="5" fill="#fff" stroke="#000" stroke-width="1"/></svg>
<div class="a" style="left:470px;top:853px;width:2px;height:116px;background:#000"></div>
<div class="a" style="left:1164px;top:855px;width:2px;height:114px;background:#000"></div>
<div class="a" style="left:558px;top:853px;width:60px;height:33px;background:#ffffff"></div>
<div class="a" style="left:558px;top:885px;width:60px;height:1px;background:#000"></div>
<div class="t" style="left:509px;top:872px;"><i>（</i><i>附</i><i>件</i><i>共</i></div>
<div class="t" style="left:621px;top:872px;"><i>页</i><i>）</i></div>
<div class="a" style="left:678px;top:853px;width:1px;height:33px;background:#f4f4f4"></div>
<div class="a" style="left:472px;top:886px;width:692px;height:1px;background:#f4f4f4"></div>
<div class="a" style="left:1156px;top:921px;width:8px;height:1px;background:#f4f4f4"></div>
<div class="a" style="left:472px;top:945px;width:692px;height:1px;background:#f4f4f4"></div>
<div class="a" style="left:724px;top:946px;width:1px;height:23px;background:#f4f4f4"></div>
<div class="a" style="left:852px;top:946px;width:218px;height:23px;background:#ffffff"></div>
<div class="a" style="left:434px;top:969px;width:1265px;height:1px;background:#a0a0a0"></div>
<div class="a" style="left:434px;top:970px;width:1265px;height:2px;background:#f0f0f0"></div>
<div class="a" style="left:434px;top:970px;width:16px;height:2px;background:#f0f0f0"></div>
<div class="a" style="left:450px;top:970px;width:1px;height:2px;background:#a0a0a0"></div>
<div class="a" style="left:451px;top:970px;width:16px;height:2px;background:#f0f0f0"></div>
<div class="a" style="left:467px;top:970px;width:1px;height:2px;background:#a0a0a0"></div>
<div class="a" style="left:468px;top:970px;width:16px;height:2px;background:#f0f0f0"></div>
<div class="a" style="left:484px;top:970px;width:1px;height:2px;background:#a0a0a0"></div>
<div class="a" style="left:485px;top:970px;width:16px;height:2px;background:#f0f0f0"></div>
<div class="a" style="left:501px;top:970px;width:1px;height:2px;background:#a0a0a0"></div>
<div class="a" style="left:434px;top:969px;width:1px;height:3px;background:#a0a0a0"></div>
<svg class="a" style="left:502px;top:969px;" width="62" height="3" viewBox="0 0 62 3"><path d="M0 0L3 3H57L61 0Z" fill="#fff" style="shape-rendering:auto"/><path d="M0.5 0L3 3M60.5 0L58 3" stroke="#000" style="shape-rendering:auto"/></svg>
<div class="a" style="left:502px;top:969px;width:62px;height:3px;overflow:hidden"><div class="t" style="left:16px;top:1px"><i>土</i><i>方</i></div></div>
</body></html>
